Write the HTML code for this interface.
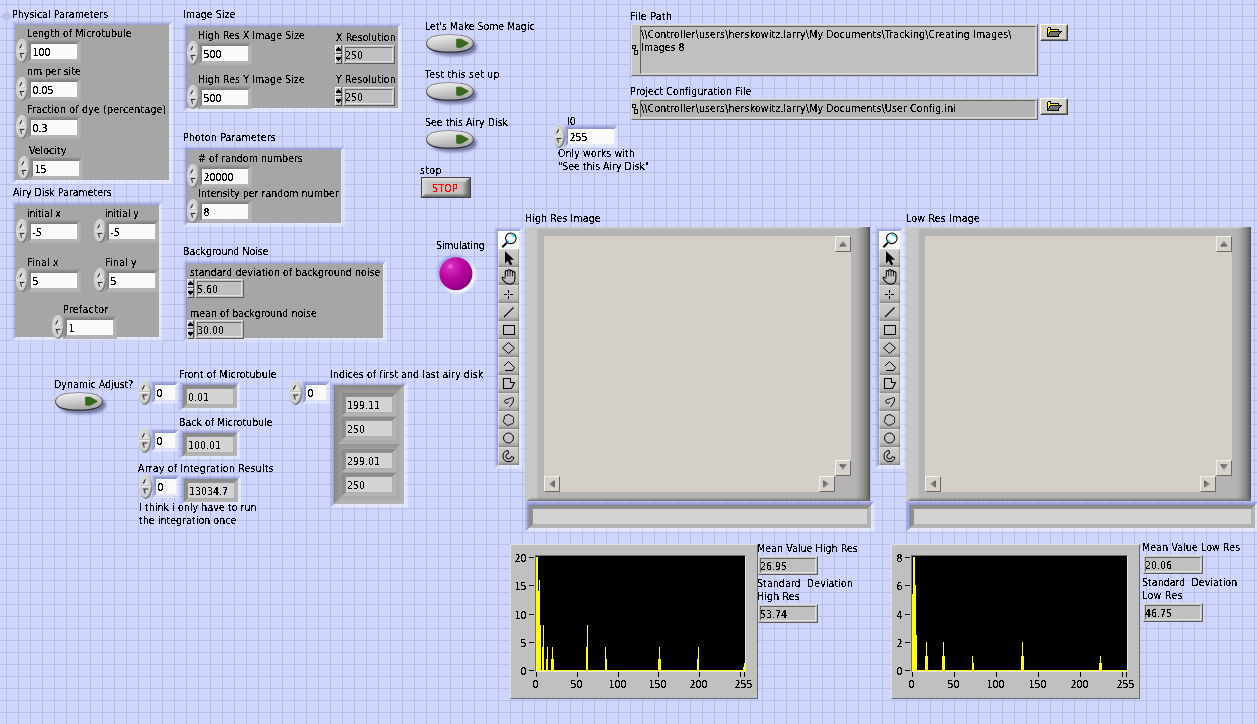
<!DOCTYPE html>
<html><head><meta charset="utf-8"><title>Front Panel</title>
<style>
html,body{margin:0;padding:0}
body{width:1257px;height:724px;overflow:hidden;position:relative;background-color:#cfd6fd;
background-image:linear-gradient(to right,#b8bfe7 1px,transparent 1px),linear-gradient(to bottom,#b8bfe7 1px,transparent 1px);
background-size:12px 12px;background-position:6px 4px;
font-family:'DejaVu Sans Condensed','Liberation Sans',sans-serif;font-size:10.5px;line-height:13px;color:#000}
div,svg{position:absolute;box-sizing:border-box}
svg{overflow:visible}
.t{white-space:pre;height:13px;filter:url(#thr)}
</style></head><body>
<svg width="0" height="0" style="left:0;top:0"><defs><filter id="thr" x="0" y="0" width="100%" height="100%" color-interpolation-filters="sRGB"><feComponentTransfer><feFuncA type="discrete" tableValues="0 0 0 0 0 0 0 0 1 1 1 1 1 1 1 1 1 1 1 1"/></feComponentTransfer></filter><linearGradient id="sg" x1="0" y1="0" x2="1" y2="1"><stop offset="0" stop-color="#f6f6f6"/><stop offset=".4" stop-color="#d4d4d4"/><stop offset=".75" stop-color="#8a8a8a"/><stop offset="1" stop-color="#505050"/></linearGradient><linearGradient id="og" x1="0" y1="0" x2="0.3" y2="1"><stop offset="0" stop-color="#f6f6f6"/><stop offset=".45" stop-color="#d6d6d6"/><stop offset="1" stop-color="#acacac"/></linearGradient><linearGradient id="oo" x1="0" y1="0" x2="0" y2="1"><stop offset="0" stop-color="#7c7c7c"/><stop offset=".5" stop-color="#4a4a4a"/><stop offset="1" stop-color="#2c2c2c"/></linearGradient><filter id="ob" x="-20%" y="-40%" width="150%" height="200%"><feGaussianBlur stdDeviation="1.5"/></filter><linearGradient id="agu" x1="0.3" y1="1" x2="0.6" y2="0"><stop offset="0" stop-color="#505050"/><stop offset=".55" stop-color="#8c8c8c"/><stop offset="1" stop-color="#c8c8c8"/></linearGradient><linearGradient id="agd" x1="0.2" y1="0" x2="0.7" y2="1"><stop offset="0" stop-color="#505050"/><stop offset=".55" stop-color="#8c8c8c"/><stop offset="1" stop-color="#c8c8c8"/></linearGradient><linearGradient id="agl" x1="1" y1="0.3" x2="0" y2="0.6"><stop offset="0" stop-color="#505050"/><stop offset=".55" stop-color="#8c8c8c"/><stop offset="1" stop-color="#c8c8c8"/></linearGradient><linearGradient id="agr" x1="0" y1="0.2" x2="1" y2="0.7"><stop offset="0" stop-color="#505050"/><stop offset=".55" stop-color="#8c8c8c"/><stop offset="1" stop-color="#c8c8c8"/></linearGradient></defs></svg>
<svg style="left:0;top:10px" width="13" height="13" viewBox="0 0 13 13"><path d="M6.5 1L12 6.5L6.5 12L1 6.5Z" fill="#bcc2ea"/></svg>
<div class="t" style="left:12px;top:8px;letter-spacing:0.041px;">Physical Parameters</div>
<div style="left:12px;top:21px;width:161px;height:163px;border:1px solid;border-color:rgba(70,80,155,.07) rgba(255,255,255,.30) rgba(255,255,255,.30) rgba(70,80,155,.07);"></div>
<div style="left:13px;top:22px;width:159px;height:161px;border:1px solid;border-color:rgba(70,80,155,.16) rgba(255,255,255,.36) rgba(255,255,255,.36) rgba(70,80,155,.16);"></div>
<div style="left:14px;top:23px;width:157px;height:159px;border:1px solid;border-color:rgba(70,80,155,.27) rgba(255,255,255,.40) rgba(255,255,255,.40) rgba(70,80,155,.27);"></div>
<div style="left:15px;top:24px;width:155px;height:157px;border:1px solid;border-color:rgba(70,80,155,.38) rgba(255,255,255,.44) rgba(255,255,255,.44) rgba(70,80,155,.38);"></div>
<div style="left:16px;top:25px;width:153px;height:155px;background:#a6a6a6;"></div>
<div class="t" style="left:27px;top:27px;letter-spacing:0.071px;">Length of Microtubule</div>
<div style="left:27px;top:40px;width:54px;height:23px;border:1px solid;border-color:#9c9c9c #b0b0b0 #b0b0b0 #9c9c9c;"></div>
<div style="left:28px;top:41px;width:52px;height:21px;border:1px solid;border-color:#929292 #b2b2b2 #b2b2b2 #929292;"></div>
<div style="left:29px;top:42px;width:50px;height:19px;border:1px solid;border-color:#888888 #b4b4b4 #b4b4b4 #888888;"></div>
<div style="left:30px;top:43px;width:48px;height:17px;border:1px solid;border-color:#808080 #b6b6b6 #b6b6b6 #808080;"></div>
<div style="left:31px;top:44px;width:46px;height:15px;background:#fafafa;"></div>
<div class="t" style="left:32.4px;top:46px;">100</div>
<svg style="left:16.0px;top:39.0px" width="12" height="24" viewBox="0 0 12 24" preserveAspectRatio="none"><ellipse cx="6" cy="12" rx="6" ry="12" fill="url(#sg)"/><ellipse cx="5.5" cy="11.5" rx="5" ry="10.9" fill="#cfcfcf"/><ellipse cx="4.6" cy="8" rx="3" ry="6" fill="#dadada" opacity=".7"/><path d="M.8 11.2h9.6" stroke="#b4b4b4" stroke-width=".7"/><path d="M.8 12h9.8" stroke="#ececec" stroke-width="1"/><path d="M5.9 5L3.7 9.4" stroke="#2c2c2c" stroke-width="1.1" fill="none"/><path d="M6 5.4L8.2 9.7H3.8" stroke="#f0f0f0" stroke-width=".9" fill="none"/><path d="M3.7 14.5H8.3" stroke="#333333" stroke-width="1.1" fill="none"/><path d="M5.7 18.8L4.5 14.8" stroke="#3c3c3c" stroke-width="1.1" fill="none"/><path d="M6.1 18.6L8.2 15" stroke="#f0f0f0" stroke-width=".9" fill="none"/></svg>
<div class="t" style="left:27px;top:65px;letter-spacing:-0.025px;">nm per site</div>
<div style="left:27px;top:78px;width:54px;height:23px;border:1px solid;border-color:#9c9c9c #b0b0b0 #b0b0b0 #9c9c9c;"></div>
<div style="left:28px;top:79px;width:52px;height:21px;border:1px solid;border-color:#929292 #b2b2b2 #b2b2b2 #929292;"></div>
<div style="left:29px;top:80px;width:50px;height:19px;border:1px solid;border-color:#888888 #b4b4b4 #b4b4b4 #888888;"></div>
<div style="left:30px;top:81px;width:48px;height:17px;border:1px solid;border-color:#808080 #b6b6b6 #b6b6b6 #808080;"></div>
<div style="left:31px;top:82px;width:46px;height:15px;background:#fafafa;"></div>
<div class="t" style="left:32.4px;top:84px;">0.05</div>
<svg style="left:16.0px;top:77.0px" width="12" height="24" viewBox="0 0 12 24" preserveAspectRatio="none"><ellipse cx="6" cy="12" rx="6" ry="12" fill="url(#sg)"/><ellipse cx="5.5" cy="11.5" rx="5" ry="10.9" fill="#cfcfcf"/><ellipse cx="4.6" cy="8" rx="3" ry="6" fill="#dadada" opacity=".7"/><path d="M.8 11.2h9.6" stroke="#b4b4b4" stroke-width=".7"/><path d="M.8 12h9.8" stroke="#ececec" stroke-width="1"/><path d="M5.9 5L3.7 9.4" stroke="#2c2c2c" stroke-width="1.1" fill="none"/><path d="M6 5.4L8.2 9.7H3.8" stroke="#f0f0f0" stroke-width=".9" fill="none"/><path d="M3.7 14.5H8.3" stroke="#333333" stroke-width="1.1" fill="none"/><path d="M5.7 18.8L4.5 14.8" stroke="#3c3c3c" stroke-width="1.1" fill="none"/><path d="M6.1 18.6L8.2 15" stroke="#f0f0f0" stroke-width=".9" fill="none"/></svg>
<div class="t" style="left:27px;top:103px;letter-spacing:0.186px;">Fraction of dye (percentage)</div>
<div style="left:27px;top:116px;width:54px;height:23px;border:1px solid;border-color:#9c9c9c #b0b0b0 #b0b0b0 #9c9c9c;"></div>
<div style="left:28px;top:117px;width:52px;height:21px;border:1px solid;border-color:#929292 #b2b2b2 #b2b2b2 #929292;"></div>
<div style="left:29px;top:118px;width:50px;height:19px;border:1px solid;border-color:#888888 #b4b4b4 #b4b4b4 #888888;"></div>
<div style="left:30px;top:119px;width:48px;height:17px;border:1px solid;border-color:#808080 #b6b6b6 #b6b6b6 #808080;"></div>
<div style="left:31px;top:120px;width:46px;height:15px;background:#fafafa;"></div>
<div class="t" style="left:32.4px;top:122px;">0.3</div>
<svg style="left:16.0px;top:115.0px" width="12" height="24" viewBox="0 0 12 24" preserveAspectRatio="none"><ellipse cx="6" cy="12" rx="6" ry="12" fill="url(#sg)"/><ellipse cx="5.5" cy="11.5" rx="5" ry="10.9" fill="#cfcfcf"/><ellipse cx="4.6" cy="8" rx="3" ry="6" fill="#dadada" opacity=".7"/><path d="M.8 11.2h9.6" stroke="#b4b4b4" stroke-width=".7"/><path d="M.8 12h9.8" stroke="#ececec" stroke-width="1"/><path d="M5.9 5L3.7 9.4" stroke="#2c2c2c" stroke-width="1.1" fill="none"/><path d="M6 5.4L8.2 9.7H3.8" stroke="#f0f0f0" stroke-width=".9" fill="none"/><path d="M3.7 14.5H8.3" stroke="#333333" stroke-width="1.1" fill="none"/><path d="M5.7 18.8L4.5 14.8" stroke="#3c3c3c" stroke-width="1.1" fill="none"/><path d="M6.1 18.6L8.2 15" stroke="#f0f0f0" stroke-width=".9" fill="none"/></svg>
<div class="t" style="left:29px;top:144px;letter-spacing:0.045px;">Velocity</div>
<div style="left:29px;top:157px;width:54px;height:23px;border:1px solid;border-color:#9c9c9c #b0b0b0 #b0b0b0 #9c9c9c;"></div>
<div style="left:30px;top:158px;width:52px;height:21px;border:1px solid;border-color:#929292 #b2b2b2 #b2b2b2 #929292;"></div>
<div style="left:31px;top:159px;width:50px;height:19px;border:1px solid;border-color:#888888 #b4b4b4 #b4b4b4 #888888;"></div>
<div style="left:32px;top:160px;width:48px;height:17px;border:1px solid;border-color:#808080 #b6b6b6 #b6b6b6 #808080;"></div>
<div style="left:33px;top:161px;width:46px;height:15px;background:#fafafa;"></div>
<div class="t" style="left:34.4px;top:163px;">15</div>
<svg style="left:18.0px;top:156.0px" width="12" height="24" viewBox="0 0 12 24" preserveAspectRatio="none"><ellipse cx="6" cy="12" rx="6" ry="12" fill="url(#sg)"/><ellipse cx="5.5" cy="11.5" rx="5" ry="10.9" fill="#cfcfcf"/><ellipse cx="4.6" cy="8" rx="3" ry="6" fill="#dadada" opacity=".7"/><path d="M.8 11.2h9.6" stroke="#b4b4b4" stroke-width=".7"/><path d="M.8 12h9.8" stroke="#ececec" stroke-width="1"/><path d="M5.9 5L3.7 9.4" stroke="#2c2c2c" stroke-width="1.1" fill="none"/><path d="M6 5.4L8.2 9.7H3.8" stroke="#f0f0f0" stroke-width=".9" fill="none"/><path d="M3.7 14.5H8.3" stroke="#333333" stroke-width="1.1" fill="none"/><path d="M5.7 18.8L4.5 14.8" stroke="#3c3c3c" stroke-width="1.1" fill="none"/><path d="M6.1 18.6L8.2 15" stroke="#f0f0f0" stroke-width=".9" fill="none"/></svg>
<div class="t" style="left:13px;top:186px;letter-spacing:-0.004px;">Airy Disk Parameters</div>
<div style="left:12px;top:201px;width:151px;height:140px;border:1px solid;border-color:rgba(70,80,155,.07) rgba(255,255,255,.30) rgba(255,255,255,.30) rgba(70,80,155,.07);"></div>
<div style="left:13px;top:202px;width:149px;height:138px;border:1px solid;border-color:rgba(70,80,155,.16) rgba(255,255,255,.36) rgba(255,255,255,.36) rgba(70,80,155,.16);"></div>
<div style="left:14px;top:203px;width:147px;height:136px;border:1px solid;border-color:rgba(70,80,155,.27) rgba(255,255,255,.40) rgba(255,255,255,.40) rgba(70,80,155,.27);"></div>
<div style="left:15px;top:204px;width:145px;height:134px;border:1px solid;border-color:rgba(70,80,155,.38) rgba(255,255,255,.44) rgba(255,255,255,.44) rgba(70,80,155,.38);"></div>
<div style="left:16px;top:205px;width:143px;height:132px;background:#a6a6a6;"></div>
<div class="t" style="left:27px;top:207px;letter-spacing:-0.085px;">initial x</div>
<div style="left:27px;top:220px;width:54px;height:23px;border:1px solid;border-color:#9c9c9c #b0b0b0 #b0b0b0 #9c9c9c;"></div>
<div style="left:28px;top:221px;width:52px;height:21px;border:1px solid;border-color:#929292 #b2b2b2 #b2b2b2 #929292;"></div>
<div style="left:29px;top:222px;width:50px;height:19px;border:1px solid;border-color:#888888 #b4b4b4 #b4b4b4 #888888;"></div>
<div style="left:30px;top:223px;width:48px;height:17px;border:1px solid;border-color:#808080 #b6b6b6 #b6b6b6 #808080;"></div>
<div style="left:31px;top:224px;width:46px;height:15px;background:#fafafa;"></div>
<div class="t" style="left:32.4px;top:226px;">-5</div>
<svg style="left:16.0px;top:219.0px" width="12" height="24" viewBox="0 0 12 24" preserveAspectRatio="none"><ellipse cx="6" cy="12" rx="6" ry="12" fill="url(#sg)"/><ellipse cx="5.5" cy="11.5" rx="5" ry="10.9" fill="#cfcfcf"/><ellipse cx="4.6" cy="8" rx="3" ry="6" fill="#dadada" opacity=".7"/><path d="M.8 11.2h9.6" stroke="#b4b4b4" stroke-width=".7"/><path d="M.8 12h9.8" stroke="#ececec" stroke-width="1"/><path d="M5.9 5L3.7 9.4" stroke="#2c2c2c" stroke-width="1.1" fill="none"/><path d="M6 5.4L8.2 9.7H3.8" stroke="#f0f0f0" stroke-width=".9" fill="none"/><path d="M3.7 14.5H8.3" stroke="#333333" stroke-width="1.1" fill="none"/><path d="M5.7 18.8L4.5 14.8" stroke="#3c3c3c" stroke-width="1.1" fill="none"/><path d="M6.1 18.6L8.2 15" stroke="#f0f0f0" stroke-width=".9" fill="none"/></svg>
<div class="t" style="left:105px;top:207px;letter-spacing:-0.097px;">initial y</div>
<div style="left:105px;top:220px;width:54px;height:23px;border:1px solid;border-color:#9c9c9c #b0b0b0 #b0b0b0 #9c9c9c;"></div>
<div style="left:106px;top:221px;width:52px;height:21px;border:1px solid;border-color:#929292 #b2b2b2 #b2b2b2 #929292;"></div>
<div style="left:107px;top:222px;width:50px;height:19px;border:1px solid;border-color:#888888 #b4b4b4 #b4b4b4 #888888;"></div>
<div style="left:108px;top:223px;width:48px;height:17px;border:1px solid;border-color:#808080 #b6b6b6 #b6b6b6 #808080;"></div>
<div style="left:109px;top:224px;width:46px;height:15px;background:#fafafa;"></div>
<div class="t" style="left:110.4px;top:226px;">-5</div>
<svg style="left:94.0px;top:219.0px" width="12" height="24" viewBox="0 0 12 24" preserveAspectRatio="none"><ellipse cx="6" cy="12" rx="6" ry="12" fill="url(#sg)"/><ellipse cx="5.5" cy="11.5" rx="5" ry="10.9" fill="#cfcfcf"/><ellipse cx="4.6" cy="8" rx="3" ry="6" fill="#dadada" opacity=".7"/><path d="M.8 11.2h9.6" stroke="#b4b4b4" stroke-width=".7"/><path d="M.8 12h9.8" stroke="#ececec" stroke-width="1"/><path d="M5.9 5L3.7 9.4" stroke="#2c2c2c" stroke-width="1.1" fill="none"/><path d="M6 5.4L8.2 9.7H3.8" stroke="#f0f0f0" stroke-width=".9" fill="none"/><path d="M3.7 14.5H8.3" stroke="#333333" stroke-width="1.1" fill="none"/><path d="M5.7 18.8L4.5 14.8" stroke="#3c3c3c" stroke-width="1.1" fill="none"/><path d="M6.1 18.6L8.2 15" stroke="#f0f0f0" stroke-width=".9" fill="none"/></svg>
<div class="t" style="left:27px;top:256px;letter-spacing:0.201px;">Final x</div>
<div style="left:27px;top:269px;width:54px;height:23px;border:1px solid;border-color:#9c9c9c #b0b0b0 #b0b0b0 #9c9c9c;"></div>
<div style="left:28px;top:270px;width:52px;height:21px;border:1px solid;border-color:#929292 #b2b2b2 #b2b2b2 #929292;"></div>
<div style="left:29px;top:271px;width:50px;height:19px;border:1px solid;border-color:#888888 #b4b4b4 #b4b4b4 #888888;"></div>
<div style="left:30px;top:272px;width:48px;height:17px;border:1px solid;border-color:#808080 #b6b6b6 #b6b6b6 #808080;"></div>
<div style="left:31px;top:273px;width:46px;height:15px;background:#fafafa;"></div>
<div class="t" style="left:32.4px;top:275px;">5</div>
<svg style="left:16.0px;top:268.0px" width="12" height="24" viewBox="0 0 12 24" preserveAspectRatio="none"><ellipse cx="6" cy="12" rx="6" ry="12" fill="url(#sg)"/><ellipse cx="5.5" cy="11.5" rx="5" ry="10.9" fill="#cfcfcf"/><ellipse cx="4.6" cy="8" rx="3" ry="6" fill="#dadada" opacity=".7"/><path d="M.8 11.2h9.6" stroke="#b4b4b4" stroke-width=".7"/><path d="M.8 12h9.8" stroke="#ececec" stroke-width="1"/><path d="M5.9 5L3.7 9.4" stroke="#2c2c2c" stroke-width="1.1" fill="none"/><path d="M6 5.4L8.2 9.7H3.8" stroke="#f0f0f0" stroke-width=".9" fill="none"/><path d="M3.7 14.5H8.3" stroke="#333333" stroke-width="1.1" fill="none"/><path d="M5.7 18.8L4.5 14.8" stroke="#3c3c3c" stroke-width="1.1" fill="none"/><path d="M6.1 18.6L8.2 15" stroke="#f0f0f0" stroke-width=".9" fill="none"/></svg>
<div class="t" style="left:105px;top:256px;letter-spacing:0.201px;">Final y</div>
<div style="left:105px;top:269px;width:54px;height:23px;border:1px solid;border-color:#9c9c9c #b0b0b0 #b0b0b0 #9c9c9c;"></div>
<div style="left:106px;top:270px;width:52px;height:21px;border:1px solid;border-color:#929292 #b2b2b2 #b2b2b2 #929292;"></div>
<div style="left:107px;top:271px;width:50px;height:19px;border:1px solid;border-color:#888888 #b4b4b4 #b4b4b4 #888888;"></div>
<div style="left:108px;top:272px;width:48px;height:17px;border:1px solid;border-color:#808080 #b6b6b6 #b6b6b6 #808080;"></div>
<div style="left:109px;top:273px;width:46px;height:15px;background:#fafafa;"></div>
<div class="t" style="left:110.4px;top:275px;">5</div>
<svg style="left:94.0px;top:268.0px" width="12" height="24" viewBox="0 0 12 24" preserveAspectRatio="none"><ellipse cx="6" cy="12" rx="6" ry="12" fill="url(#sg)"/><ellipse cx="5.5" cy="11.5" rx="5" ry="10.9" fill="#cfcfcf"/><ellipse cx="4.6" cy="8" rx="3" ry="6" fill="#dadada" opacity=".7"/><path d="M.8 11.2h9.6" stroke="#b4b4b4" stroke-width=".7"/><path d="M.8 12h9.8" stroke="#ececec" stroke-width="1"/><path d="M5.9 5L3.7 9.4" stroke="#2c2c2c" stroke-width="1.1" fill="none"/><path d="M6 5.4L8.2 9.7H3.8" stroke="#f0f0f0" stroke-width=".9" fill="none"/><path d="M3.7 14.5H8.3" stroke="#333333" stroke-width="1.1" fill="none"/><path d="M5.7 18.8L4.5 14.8" stroke="#3c3c3c" stroke-width="1.1" fill="none"/><path d="M6.1 18.6L8.2 15" stroke="#f0f0f0" stroke-width=".9" fill="none"/></svg>
<div class="t" style="left:63px;top:303px;letter-spacing:0.330px;">Prefactor</div>
<div style="left:63px;top:316px;width:54px;height:23px;border:1px solid;border-color:#9c9c9c #b0b0b0 #b0b0b0 #9c9c9c;"></div>
<div style="left:64px;top:317px;width:52px;height:21px;border:1px solid;border-color:#929292 #b2b2b2 #b2b2b2 #929292;"></div>
<div style="left:65px;top:318px;width:50px;height:19px;border:1px solid;border-color:#888888 #b4b4b4 #b4b4b4 #888888;"></div>
<div style="left:66px;top:319px;width:48px;height:17px;border:1px solid;border-color:#808080 #b6b6b6 #b6b6b6 #808080;"></div>
<div style="left:67px;top:320px;width:46px;height:15px;background:#fafafa;"></div>
<div class="t" style="left:68.4px;top:322px;">1</div>
<svg style="left:52.0px;top:315.0px" width="12" height="24" viewBox="0 0 12 24" preserveAspectRatio="none"><ellipse cx="6" cy="12" rx="6" ry="12" fill="url(#sg)"/><ellipse cx="5.5" cy="11.5" rx="5" ry="10.9" fill="#cfcfcf"/><ellipse cx="4.6" cy="8" rx="3" ry="6" fill="#dadada" opacity=".7"/><path d="M.8 11.2h9.6" stroke="#b4b4b4" stroke-width=".7"/><path d="M.8 12h9.8" stroke="#ececec" stroke-width="1"/><path d="M5.9 5L3.7 9.4" stroke="#2c2c2c" stroke-width="1.1" fill="none"/><path d="M6 5.4L8.2 9.7H3.8" stroke="#f0f0f0" stroke-width=".9" fill="none"/><path d="M3.7 14.5H8.3" stroke="#333333" stroke-width="1.1" fill="none"/><path d="M5.7 18.8L4.5 14.8" stroke="#3c3c3c" stroke-width="1.1" fill="none"/><path d="M6.1 18.6L8.2 15" stroke="#f0f0f0" stroke-width=".9" fill="none"/></svg>
<div class="t" style="left:183px;top:8px;letter-spacing:0.024px;">Image Size</div>
<div style="left:183px;top:23px;width:219px;height:89px;border:1px solid;border-color:rgba(70,80,155,.07) rgba(255,255,255,.30) rgba(255,255,255,.30) rgba(70,80,155,.07);"></div>
<div style="left:184px;top:24px;width:217px;height:87px;border:1px solid;border-color:rgba(70,80,155,.16) rgba(255,255,255,.36) rgba(255,255,255,.36) rgba(70,80,155,.16);"></div>
<div style="left:185px;top:25px;width:215px;height:85px;border:1px solid;border-color:rgba(70,80,155,.27) rgba(255,255,255,.40) rgba(255,255,255,.40) rgba(70,80,155,.27);"></div>
<div style="left:186px;top:26px;width:213px;height:83px;border:1px solid;border-color:rgba(70,80,155,.38) rgba(255,255,255,.44) rgba(255,255,255,.44) rgba(70,80,155,.38);"></div>
<div style="left:187px;top:27px;width:211px;height:81px;background:#a6a6a6;"></div>
<div class="t" style="left:198px;top:29px;letter-spacing:0.035px;">High Res X Image Size</div>
<div style="left:198px;top:42px;width:54px;height:23px;border:1px solid;border-color:#9c9c9c #b0b0b0 #b0b0b0 #9c9c9c;"></div>
<div style="left:199px;top:43px;width:52px;height:21px;border:1px solid;border-color:#929292 #b2b2b2 #b2b2b2 #929292;"></div>
<div style="left:200px;top:44px;width:50px;height:19px;border:1px solid;border-color:#888888 #b4b4b4 #b4b4b4 #888888;"></div>
<div style="left:201px;top:45px;width:48px;height:17px;border:1px solid;border-color:#808080 #b6b6b6 #b6b6b6 #808080;"></div>
<div style="left:202px;top:46px;width:46px;height:15px;background:#fafafa;"></div>
<div class="t" style="left:203.4px;top:48px;">500</div>
<svg style="left:187.0px;top:41.0px" width="12" height="24" viewBox="0 0 12 24" preserveAspectRatio="none"><ellipse cx="6" cy="12" rx="6" ry="12" fill="url(#sg)"/><ellipse cx="5.5" cy="11.5" rx="5" ry="10.9" fill="#cfcfcf"/><ellipse cx="4.6" cy="8" rx="3" ry="6" fill="#dadada" opacity=".7"/><path d="M.8 11.2h9.6" stroke="#b4b4b4" stroke-width=".7"/><path d="M.8 12h9.8" stroke="#ececec" stroke-width="1"/><path d="M5.9 5L3.7 9.4" stroke="#2c2c2c" stroke-width="1.1" fill="none"/><path d="M6 5.4L8.2 9.7H3.8" stroke="#f0f0f0" stroke-width=".9" fill="none"/><path d="M3.7 14.5H8.3" stroke="#333333" stroke-width="1.1" fill="none"/><path d="M5.7 18.8L4.5 14.8" stroke="#3c3c3c" stroke-width="1.1" fill="none"/><path d="M6.1 18.6L8.2 15" stroke="#f0f0f0" stroke-width=".9" fill="none"/></svg>
<div class="t" style="left:198px;top:73px;letter-spacing:0.070px;">High Res Y Image Size</div>
<div style="left:198px;top:86px;width:54px;height:23px;border:1px solid;border-color:#9c9c9c #b0b0b0 #b0b0b0 #9c9c9c;"></div>
<div style="left:199px;top:87px;width:52px;height:21px;border:1px solid;border-color:#929292 #b2b2b2 #b2b2b2 #929292;"></div>
<div style="left:200px;top:88px;width:50px;height:19px;border:1px solid;border-color:#888888 #b4b4b4 #b4b4b4 #888888;"></div>
<div style="left:201px;top:89px;width:48px;height:17px;border:1px solid;border-color:#808080 #b6b6b6 #b6b6b6 #808080;"></div>
<div style="left:202px;top:90px;width:46px;height:15px;background:#fafafa;"></div>
<div class="t" style="left:203.4px;top:92px;">500</div>
<svg style="left:187.0px;top:85.0px" width="12" height="24" viewBox="0 0 12 24" preserveAspectRatio="none"><ellipse cx="6" cy="12" rx="6" ry="12" fill="url(#sg)"/><ellipse cx="5.5" cy="11.5" rx="5" ry="10.9" fill="#cfcfcf"/><ellipse cx="4.6" cy="8" rx="3" ry="6" fill="#dadada" opacity=".7"/><path d="M.8 11.2h9.6" stroke="#b4b4b4" stroke-width=".7"/><path d="M.8 12h9.8" stroke="#ececec" stroke-width="1"/><path d="M5.9 5L3.7 9.4" stroke="#2c2c2c" stroke-width="1.1" fill="none"/><path d="M6 5.4L8.2 9.7H3.8" stroke="#f0f0f0" stroke-width=".9" fill="none"/><path d="M3.7 14.5H8.3" stroke="#333333" stroke-width="1.1" fill="none"/><path d="M5.7 18.8L4.5 14.8" stroke="#3c3c3c" stroke-width="1.1" fill="none"/><path d="M6.1 18.6L8.2 15" stroke="#f0f0f0" stroke-width=".9" fill="none"/></svg>
<div class="t" style="left:336px;top:31px;letter-spacing:0.084px;">X Resolution</div>
<div style="left:335px;top:45px;width:7px;height:9px;background:#c4c4c4;border:1px solid;border-color:#f4f4f4 #4a4a4a #4a4a4a #f4f4f4;"></div>
<div style="left:335px;top:54px;width:7px;height:10px;background:#c4c4c4;border:1px solid;border-color:#f4f4f4 #4a4a4a #4a4a4a #f4f4f4;"></div>
<svg style="left:335px;top:45px" width="7" height="19" viewBox="0 0 7 19" shape-rendering="crispEdges"><path d="M3 2h1v1h1v1h1v2h-5v-2h1v-1h1z" fill="#000"/><path d="M1 12h5v2h-1v1h-1v1h-1v-1h-1v-1h-1z" fill="#000"/></svg>
<div style="left:343px;top:45px;width:52px;height:19px;background:#c0c0c0;border:1px solid;border-color:#dedede #5c5c5c #5c5c5c #dedede;"></div>
<div style="left:345px;top:47px;width:48px;height:15px;border:1px solid;border-color:#666 #e2e2e2 #e2e2e2 #666;"></div>
<div class="t" style="left:345px;top:49px;">250</div>
<div class="t" style="left:336px;top:73px;letter-spacing:0.147px;">Y Resolution</div>
<div style="left:335px;top:87px;width:7px;height:9px;background:#c4c4c4;border:1px solid;border-color:#f4f4f4 #4a4a4a #4a4a4a #f4f4f4;"></div>
<div style="left:335px;top:96px;width:7px;height:10px;background:#c4c4c4;border:1px solid;border-color:#f4f4f4 #4a4a4a #4a4a4a #f4f4f4;"></div>
<svg style="left:335px;top:87px" width="7" height="19" viewBox="0 0 7 19" shape-rendering="crispEdges"><path d="M3 2h1v1h1v1h1v2h-5v-2h1v-1h1z" fill="#000"/><path d="M1 12h5v2h-1v1h-1v1h-1v-1h-1v-1h-1z" fill="#000"/></svg>
<div style="left:343px;top:87px;width:52px;height:19px;background:#c0c0c0;border:1px solid;border-color:#dedede #5c5c5c #5c5c5c #dedede;"></div>
<div style="left:345px;top:89px;width:48px;height:15px;border:1px solid;border-color:#666 #e2e2e2 #e2e2e2 #666;"></div>
<div class="t" style="left:345px;top:91px;">250</div>
<div class="t" style="left:183px;top:131px;letter-spacing:0.172px;">Photon Parameters</div>
<div style="left:183px;top:146px;width:162px;height:81px;border:1px solid;border-color:rgba(70,80,155,.07) rgba(255,255,255,.30) rgba(255,255,255,.30) rgba(70,80,155,.07);"></div>
<div style="left:184px;top:147px;width:160px;height:79px;border:1px solid;border-color:rgba(70,80,155,.16) rgba(255,255,255,.36) rgba(255,255,255,.36) rgba(70,80,155,.16);"></div>
<div style="left:185px;top:148px;width:158px;height:77px;border:1px solid;border-color:rgba(70,80,155,.27) rgba(255,255,255,.40) rgba(255,255,255,.40) rgba(70,80,155,.27);"></div>
<div style="left:186px;top:149px;width:156px;height:75px;border:1px solid;border-color:rgba(70,80,155,.38) rgba(255,255,255,.44) rgba(255,255,255,.44) rgba(70,80,155,.38);"></div>
<div style="left:187px;top:150px;width:154px;height:73px;background:#a6a6a6;"></div>
<div class="t" style="left:198px;top:152px;letter-spacing:0.019px;"># of random numbers</div>
<div style="left:198px;top:165px;width:54px;height:23px;border:1px solid;border-color:#9c9c9c #b0b0b0 #b0b0b0 #9c9c9c;"></div>
<div style="left:199px;top:166px;width:52px;height:21px;border:1px solid;border-color:#929292 #b2b2b2 #b2b2b2 #929292;"></div>
<div style="left:200px;top:167px;width:50px;height:19px;border:1px solid;border-color:#888888 #b4b4b4 #b4b4b4 #888888;"></div>
<div style="left:201px;top:168px;width:48px;height:17px;border:1px solid;border-color:#808080 #b6b6b6 #b6b6b6 #808080;"></div>
<div style="left:202px;top:169px;width:46px;height:15px;background:#fafafa;"></div>
<div class="t" style="left:203.4px;top:171px;">20000</div>
<svg style="left:187.0px;top:164.0px" width="12" height="24" viewBox="0 0 12 24" preserveAspectRatio="none"><ellipse cx="6" cy="12" rx="6" ry="12" fill="url(#sg)"/><ellipse cx="5.5" cy="11.5" rx="5" ry="10.9" fill="#cfcfcf"/><ellipse cx="4.6" cy="8" rx="3" ry="6" fill="#dadada" opacity=".7"/><path d="M.8 11.2h9.6" stroke="#b4b4b4" stroke-width=".7"/><path d="M.8 12h9.8" stroke="#ececec" stroke-width="1"/><path d="M5.9 5L3.7 9.4" stroke="#2c2c2c" stroke-width="1.1" fill="none"/><path d="M6 5.4L8.2 9.7H3.8" stroke="#f0f0f0" stroke-width=".9" fill="none"/><path d="M3.7 14.5H8.3" stroke="#333333" stroke-width="1.1" fill="none"/><path d="M5.7 18.8L4.5 14.8" stroke="#3c3c3c" stroke-width="1.1" fill="none"/><path d="M6.1 18.6L8.2 15" stroke="#f0f0f0" stroke-width=".9" fill="none"/></svg>
<div class="t" style="left:198px;top:187px;letter-spacing:0.053px;">Intensity per random number</div>
<div style="left:198px;top:200px;width:54px;height:23px;border:1px solid;border-color:#9c9c9c #b0b0b0 #b0b0b0 #9c9c9c;"></div>
<div style="left:199px;top:201px;width:52px;height:21px;border:1px solid;border-color:#929292 #b2b2b2 #b2b2b2 #929292;"></div>
<div style="left:200px;top:202px;width:50px;height:19px;border:1px solid;border-color:#888888 #b4b4b4 #b4b4b4 #888888;"></div>
<div style="left:201px;top:203px;width:48px;height:17px;border:1px solid;border-color:#808080 #b6b6b6 #b6b6b6 #808080;"></div>
<div style="left:202px;top:204px;width:46px;height:15px;background:#fafafa;"></div>
<div class="t" style="left:203.4px;top:206px;">8</div>
<svg style="left:187.0px;top:199.0px" width="12" height="24" viewBox="0 0 12 24" preserveAspectRatio="none"><ellipse cx="6" cy="12" rx="6" ry="12" fill="url(#sg)"/><ellipse cx="5.5" cy="11.5" rx="5" ry="10.9" fill="#cfcfcf"/><ellipse cx="4.6" cy="8" rx="3" ry="6" fill="#dadada" opacity=".7"/><path d="M.8 11.2h9.6" stroke="#b4b4b4" stroke-width=".7"/><path d="M.8 12h9.8" stroke="#ececec" stroke-width="1"/><path d="M5.9 5L3.7 9.4" stroke="#2c2c2c" stroke-width="1.1" fill="none"/><path d="M6 5.4L8.2 9.7H3.8" stroke="#f0f0f0" stroke-width=".9" fill="none"/><path d="M3.7 14.5H8.3" stroke="#333333" stroke-width="1.1" fill="none"/><path d="M5.7 18.8L4.5 14.8" stroke="#3c3c3c" stroke-width="1.1" fill="none"/><path d="M6.1 18.6L8.2 15" stroke="#f0f0f0" stroke-width=".9" fill="none"/></svg>
<div class="t" style="left:183px;top:245px;letter-spacing:0.004px;">Background Noise</div>
<div style="left:183px;top:260px;width:204px;height:82px;border:1px solid;border-color:rgba(70,80,155,.07) rgba(255,255,255,.30) rgba(255,255,255,.30) rgba(70,80,155,.07);"></div>
<div style="left:184px;top:261px;width:202px;height:80px;border:1px solid;border-color:rgba(70,80,155,.16) rgba(255,255,255,.36) rgba(255,255,255,.36) rgba(70,80,155,.16);"></div>
<div style="left:185px;top:262px;width:200px;height:78px;border:1px solid;border-color:rgba(70,80,155,.27) rgba(255,255,255,.40) rgba(255,255,255,.40) rgba(70,80,155,.27);"></div>
<div style="left:186px;top:263px;width:198px;height:76px;border:1px solid;border-color:rgba(70,80,155,.38) rgba(255,255,255,.44) rgba(255,255,255,.44) rgba(70,80,155,.38);"></div>
<div style="left:187px;top:264px;width:196px;height:74px;background:#a6a6a6;"></div>
<div class="t" style="left:190px;top:266px;letter-spacing:0.068px;">standard deviation of background noise</div>
<div style="left:187px;top:279px;width:7px;height:9px;background:#c4c4c4;border:1px solid;border-color:#f4f4f4 #4a4a4a #4a4a4a #f4f4f4;"></div>
<div style="left:187px;top:288px;width:7px;height:10px;background:#c4c4c4;border:1px solid;border-color:#f4f4f4 #4a4a4a #4a4a4a #f4f4f4;"></div>
<svg style="left:187px;top:279px" width="7" height="19" viewBox="0 0 7 19" shape-rendering="crispEdges"><path d="M3 2h1v1h1v1h1v2h-5v-2h1v-1h1z" fill="#000"/><path d="M1 12h5v2h-1v1h-1v1h-1v-1h-1v-1h-1z" fill="#000"/></svg>
<div style="left:195px;top:279px;width:49px;height:19px;background:#c0c0c0;border:1px solid;border-color:#dedede #5c5c5c #5c5c5c #dedede;"></div>
<div style="left:197px;top:281px;width:45px;height:15px;border:1px solid;border-color:#666 #e2e2e2 #e2e2e2 #666;"></div>
<div class="t" style="left:197px;top:283px;">5.60</div>
<div class="t" style="left:190px;top:307px;letter-spacing:0.036px;">mean of background noise</div>
<div style="left:187px;top:320px;width:7px;height:9px;background:#c4c4c4;border:1px solid;border-color:#f4f4f4 #4a4a4a #4a4a4a #f4f4f4;"></div>
<div style="left:187px;top:329px;width:7px;height:10px;background:#c4c4c4;border:1px solid;border-color:#f4f4f4 #4a4a4a #4a4a4a #f4f4f4;"></div>
<svg style="left:187px;top:320px" width="7" height="19" viewBox="0 0 7 19" shape-rendering="crispEdges"><path d="M3 2h1v1h1v1h1v2h-5v-2h1v-1h1z" fill="#000"/><path d="M1 12h5v2h-1v1h-1v1h-1v-1h-1v-1h-1z" fill="#000"/></svg>
<div style="left:195px;top:320px;width:49px;height:19px;background:#c0c0c0;border:1px solid;border-color:#dedede #5c5c5c #5c5c5c #dedede;"></div>
<div style="left:197px;top:322px;width:45px;height:15px;border:1px solid;border-color:#666 #e2e2e2 #e2e2e2 #666;"></div>
<div class="t" style="left:197px;top:324px;">30.00</div>
<div class="t" style="left:425px;top:20px;letter-spacing:-0.046px;">Let's Make Some Magic</div>
<svg style="left:423px;top:31px" width="58" height="30" viewBox="-3 -3 58 30"><path d="M4.200000000000003 13C4.200000000000003 7.19 12.16 4.199999999999999 27.6 4.199999999999999C43.04 4.199999999999999 51.0 7.19 51.0 13C51.0 18.81 43.04 21.8 27.6 21.8C12.16 21.8 4.200000000000003 18.81 4.200000000000003 13Z" fill="#3a3e68" opacity=".6" filter="url(#ob)"/><path d="M0.09999999999999787 9.5C0.09999999999999787 3.36 8.19 0.1999999999999993 23.9 0.1999999999999993C39.61 0.1999999999999993 47.7 3.36 47.7 9.5C47.7 15.64 39.61 18.8 23.9 18.8C8.19 18.8 0.09999999999999787 15.64 0.09999999999999787 9.5Z" fill="url(#oo)"/><path d="M1.0 9.2C1.0 3.72 8.79 0.8999999999999986 23.9 0.8999999999999986C39.01 0.8999999999999986 46.8 3.72 46.8 9.2C46.8 14.68 39.01 17.5 23.9 17.5C8.79 17.5 1.0 14.68 1.0 9.2Z" fill="url(#og)"/><path d="M30.2 5.6Q30.2 4.8 31.1 4.8H35.2L42.2 8.7Q43 9.3 42.2 9.9L35.2 13.8H31.1Q30.2 13.8 30.2 13Z" fill="#35681c"/><path d="M31.2 5.8H35L40 8.6" stroke="#47802a" stroke-width=".8" fill="none" opacity=".6"/></svg>
<div class="t" style="left:425px;top:68px;letter-spacing:0.234px;">Test this set up</div>
<svg style="left:423px;top:79px" width="58" height="30" viewBox="-3 -3 58 30"><path d="M4.200000000000003 13C4.200000000000003 7.19 12.16 4.199999999999999 27.6 4.199999999999999C43.04 4.199999999999999 51.0 7.19 51.0 13C51.0 18.81 43.04 21.8 27.6 21.8C12.16 21.8 4.200000000000003 18.81 4.200000000000003 13Z" fill="#3a3e68" opacity=".6" filter="url(#ob)"/><path d="M0.09999999999999787 9.5C0.09999999999999787 3.36 8.19 0.1999999999999993 23.9 0.1999999999999993C39.61 0.1999999999999993 47.7 3.36 47.7 9.5C47.7 15.64 39.61 18.8 23.9 18.8C8.19 18.8 0.09999999999999787 15.64 0.09999999999999787 9.5Z" fill="url(#oo)"/><path d="M1.0 9.2C1.0 3.72 8.79 0.8999999999999986 23.9 0.8999999999999986C39.01 0.8999999999999986 46.8 3.72 46.8 9.2C46.8 14.68 39.01 17.5 23.9 17.5C8.79 17.5 1.0 14.68 1.0 9.2Z" fill="url(#og)"/><path d="M30.2 5.6Q30.2 4.8 31.1 4.8H35.2L42.2 8.7Q43 9.3 42.2 9.9L35.2 13.8H31.1Q30.2 13.8 30.2 13Z" fill="#35681c"/><path d="M31.2 5.8H35L40 8.6" stroke="#47802a" stroke-width=".8" fill="none" opacity=".6"/></svg>
<div class="t" style="left:425px;top:116px;letter-spacing:0.022px;">See this Airy Disk</div>
<svg style="left:423px;top:127px" width="58" height="30" viewBox="-3 -3 58 30"><path d="M4.200000000000003 13C4.200000000000003 7.19 12.16 4.199999999999999 27.6 4.199999999999999C43.04 4.199999999999999 51.0 7.19 51.0 13C51.0 18.81 43.04 21.8 27.6 21.8C12.16 21.8 4.200000000000003 18.81 4.200000000000003 13Z" fill="#3a3e68" opacity=".6" filter="url(#ob)"/><path d="M0.09999999999999787 9.5C0.09999999999999787 3.36 8.19 0.1999999999999993 23.9 0.1999999999999993C39.61 0.1999999999999993 47.7 3.36 47.7 9.5C47.7 15.64 39.61 18.8 23.9 18.8C8.19 18.8 0.09999999999999787 15.64 0.09999999999999787 9.5Z" fill="url(#oo)"/><path d="M1.0 9.2C1.0 3.72 8.79 0.8999999999999986 23.9 0.8999999999999986C39.01 0.8999999999999986 46.8 3.72 46.8 9.2C46.8 14.68 39.01 17.5 23.9 17.5C8.79 17.5 1.0 14.68 1.0 9.2Z" fill="url(#og)"/><path d="M30.2 5.6Q30.2 4.8 31.1 4.8H35.2L42.2 8.7Q43 9.3 42.2 9.9L35.2 13.8H31.1Q30.2 13.8 30.2 13Z" fill="#35681c"/><path d="M31.2 5.8H35L40 8.6" stroke="#47802a" stroke-width=".8" fill="none" opacity=".6"/></svg>
<div class="t" style="left:54px;top:378px;letter-spacing:0.008px;">Dynamic Adjust?</div>
<svg style="left:52px;top:389px" width="58" height="30" viewBox="-3 -3 58 30"><path d="M4.200000000000003 13C4.200000000000003 7.19 12.16 4.199999999999999 27.6 4.199999999999999C43.04 4.199999999999999 51.0 7.19 51.0 13C51.0 18.81 43.04 21.8 27.6 21.8C12.16 21.8 4.200000000000003 18.81 4.200000000000003 13Z" fill="#3a3e68" opacity=".6" filter="url(#ob)"/><path d="M0.09999999999999787 9.5C0.09999999999999787 3.36 8.19 0.1999999999999993 23.9 0.1999999999999993C39.61 0.1999999999999993 47.7 3.36 47.7 9.5C47.7 15.64 39.61 18.8 23.9 18.8C8.19 18.8 0.09999999999999787 15.64 0.09999999999999787 9.5Z" fill="url(#oo)"/><path d="M1.0 9.2C1.0 3.72 8.79 0.8999999999999986 23.9 0.8999999999999986C39.01 0.8999999999999986 46.8 3.72 46.8 9.2C46.8 14.68 39.01 17.5 23.9 17.5C8.79 17.5 1.0 14.68 1.0 9.2Z" fill="url(#og)"/><path d="M30.2 5.6Q30.2 4.8 31.1 4.8H35.2L42.2 8.7Q43 9.3 42.2 9.9L35.2 13.8H31.1Q30.2 13.8 30.2 13Z" fill="#35681c"/><path d="M31.2 5.8H35L40 8.6" stroke="#47802a" stroke-width=".8" fill="none" opacity=".6"/></svg>
<div class="t" style="left:420px;top:164px;letter-spacing:0.365px;">stop</div>
<div style="left:421px;top:177px;width:50px;height:21px;background:#444444;"></div>
<div style="left:422px;top:178px;width:48px;height:19px;background:linear-gradient(to right,#dedede 0,#cfcfcf 3px,#c2c2c2 7px,#c0c0c0 40px,#8c8c8c 44px,#5a5a5a 48px);"></div>
<div style="left:426px;top:178px;width:40px;height:4px;background:linear-gradient(#dcdcdc,#c4c4c4);clip-path:polygon(0 0,100% 0,calc(100% + 0px) 0,100% 100%,0 100%);"></div>
<div style="left:422px;top:178px;width:48px;height:4px;background:linear-gradient(#dedede,rgba(200,200,200,0));clip-path:polygon(0 0,100% 0,calc(100% - 4px) 100%,4px 100%);"></div>
<div style="left:422px;top:193px;width:48px;height:4px;background:linear-gradient(rgba(150,150,150,0),#5e5e5e);clip-path:polygon(4px 0,calc(100% - 4px) 0,100% 100%,0 100%);"></div>
<div class="t" style="left:432px;top:182px;color:#ff0000;letter-spacing:.3px;">STOP</div>
<div class="t" style="left:567px;top:115px;">I0</div>
<div style="left:564px;top:125px;width:54px;height:23px;border:1px solid;border-color:rgba(60,70,150,.16) rgba(255,255,255,.30) rgba(255,255,255,.30) rgba(60,70,150,.16);"></div>
<div style="left:565px;top:126px;width:52px;height:21px;border:1px solid;border-color:rgba(60,70,150,.27) rgba(255,255,255,.36) rgba(255,255,255,.36) rgba(60,70,150,.27);"></div>
<div style="left:566px;top:127px;width:50px;height:19px;border:1px solid;border-color:rgba(60,70,150,.36) rgba(255,255,255,.40) rgba(255,255,255,.40) rgba(60,70,150,.36);"></div>
<div style="left:567px;top:128px;width:48px;height:17px;border:1px solid;border-color:rgba(60,70,150,.44) rgba(255,255,255,.44) rgba(255,255,255,.44) rgba(60,70,150,.44);"></div>
<div style="left:568px;top:129px;width:46px;height:15px;background:#fafafa;"></div>
<div class="t" style="left:569.4px;top:131px;">255</div>
<svg style="left:553.0px;top:124.0px" width="12" height="24" viewBox="0 0 12 24" preserveAspectRatio="none"><ellipse cx="6" cy="12" rx="6" ry="12" fill="url(#sg)"/><ellipse cx="5.5" cy="11.5" rx="5" ry="10.9" fill="#cfcfcf"/><ellipse cx="4.6" cy="8" rx="3" ry="6" fill="#dadada" opacity=".7"/><path d="M.8 11.2h9.6" stroke="#b4b4b4" stroke-width=".7"/><path d="M.8 12h9.8" stroke="#ececec" stroke-width="1"/><path d="M5.9 5L3.7 9.4" stroke="#2c2c2c" stroke-width="1.1" fill="none"/><path d="M6 5.4L8.2 9.7H3.8" stroke="#f0f0f0" stroke-width=".9" fill="none"/><path d="M3.7 14.5H8.3" stroke="#333333" stroke-width="1.1" fill="none"/><path d="M5.7 18.8L4.5 14.8" stroke="#3c3c3c" stroke-width="1.1" fill="none"/><path d="M6.1 18.6L8.2 15" stroke="#f0f0f0" stroke-width=".9" fill="none"/></svg>
<div class="t" style="left:558px;top:147px;letter-spacing:0.088px;">Only works with</div>
<div class="t" style="left:558px;top:160px;letter-spacing:-0.011px;">"See this Airy Disk"</div>
<div class="t" style="left:630px;top:10px;letter-spacing:0.308px;">File Path</div>
<div style="left:631px;top:24px;width:407px;height:52px;background:#c6c6c6;border:1px solid;border-color:#dcdcdc #6a6a6a #6a6a6a #dcdcdc;"></div>
<div style="left:640px;top:26px;width:396px;height:48px;background:#c0c0c0;border:1px solid;border-color:#5e5e5e #dcdcdc #dcdcdc #5e5e5e;"></div>
<svg style="left:632px;top:45px" width="8" height="10" viewBox="0 0 8 10" shape-rendering="crispEdges"><path d="M0 0h4v4h-1v2h-1v-2h-2zM1 1v2h2v-2z" fill="#000" fill-rule="evenodd"/><path d="M2 5h4v5h-4zM3 6v3h2v-3z" fill="#000" fill-rule="evenodd"/></svg>
<div class="t" style="left:641px;top:28px;letter-spacing:.145px;">\\Controller\users\herskowitz.larry\My Documents\Tracking\Creating Images\</div>
<div class="t" style="left:641px;top:41px;">Images 8</div>
<div style="left:1040px;top:24px;width:28px;height:17px;background:#d4d0c8;border:1px solid;border-color:#ffffff #404040 #404040 #ffffff;"></div>
<div style="left:1041px;top:25px;width:26px;height:15px;border:1px solid;border-color:transparent #808080 #808080 transparent;"></div>
<svg style="left:1047px;top:27px" width="15" height="10" viewBox="0 0 15 10" shape-rendering="crispEdges"><rect x="1" y="0" width="3" height="1" fill="#000"/><rect x="0" y="1" width="4" height="1" fill="#000"/><rect x="0" y="2" width="12" height="2" fill="#000"/><rect x="0" y="4" width="15" height="1" fill="#000"/><rect x="0" y="5" width="14" height="1" fill="#000"/><rect x="0" y="6" width="13" height="1" fill="#000"/><rect x="0" y="7" width="12" height="3" fill="#000"/><rect x="1" y="1" width="2" height="2" fill="#ffff00"/><rect x="1" y="3" width="10" height="1" fill="#ffff00"/><rect x="1" y="4" width="2" height="1" fill="#ffff00"/><rect x="1" y="5" width="1" height="2" fill="#ffff00"/><rect x="3" y="5" width="10" height="1" fill="#707070"/><rect x="3" y="6" width="9" height="1" fill="#707070"/><rect x="2" y="7" width="9" height="1" fill="#707070"/><rect x="1" y="8" width="10" height="1" fill="#707070"/></svg>
<div class="t" style="left:630px;top:85px;letter-spacing:0.129px;">Project Configuration File</div>
<div style="left:631px;top:98px;width:407px;height:22px;background:#c6c6c6;border:1px solid;border-color:#dcdcdc #6a6a6a #6a6a6a #dcdcdc;"></div>
<div style="left:640px;top:100px;width:396px;height:18px;background:#b4b4b4;border:1px solid;border-color:#5e5e5e #dcdcdc #dcdcdc #5e5e5e;"></div>
<svg style="left:632px;top:104px" width="8" height="10" viewBox="0 0 8 10" shape-rendering="crispEdges"><path d="M0 0h4v4h-1v2h-1v-2h-2zM1 1v2h2v-2z" fill="#000" fill-rule="evenodd"/><path d="M2 5h4v5h-4zM3 6v3h2v-3z" fill="#000" fill-rule="evenodd"/></svg>
<div class="t" style="left:641px;top:102px;letter-spacing:.145px;">\\Controller\users\herskowitz.larry\My Documents\User Config.ini</div>
<div style="left:1040px;top:98px;width:28px;height:17px;background:#d4d0c8;border:1px solid;border-color:#ffffff #404040 #404040 #ffffff;"></div>
<div style="left:1041px;top:99px;width:26px;height:15px;border:1px solid;border-color:transparent #808080 #808080 transparent;"></div>
<svg style="left:1047px;top:101px" width="15" height="10" viewBox="0 0 15 10" shape-rendering="crispEdges"><rect x="1" y="0" width="3" height="1" fill="#000"/><rect x="0" y="1" width="4" height="1" fill="#000"/><rect x="0" y="2" width="12" height="2" fill="#000"/><rect x="0" y="4" width="15" height="1" fill="#000"/><rect x="0" y="5" width="14" height="1" fill="#000"/><rect x="0" y="6" width="13" height="1" fill="#000"/><rect x="0" y="7" width="12" height="3" fill="#000"/><rect x="1" y="1" width="2" height="2" fill="#ffff00"/><rect x="1" y="3" width="10" height="1" fill="#ffff00"/><rect x="1" y="4" width="2" height="1" fill="#ffff00"/><rect x="1" y="5" width="1" height="2" fill="#ffff00"/><rect x="3" y="5" width="10" height="1" fill="#707070"/><rect x="3" y="6" width="9" height="1" fill="#707070"/><rect x="2" y="7" width="9" height="1" fill="#707070"/><rect x="1" y="8" width="10" height="1" fill="#707070"/></svg>
<div class="t" style="left:436px;top:239px;letter-spacing:-0.205px;">Simulating</div>
<svg style="left:434px;top:252px" width="44" height="44" viewBox="0 0 44 44"><defs><radialGradient id="lg" cx=".33" cy=".28" r=".8"><stop offset="0" stop-color="#f070e0"/><stop offset=".12" stop-color="#d428bc"/><stop offset=".45" stop-color="#b808a0"/><stop offset=".8" stop-color="#a00090"/><stop offset="1" stop-color="#74006a"/></radialGradient><linearGradient id="lr" x1=".15" y1=".15" x2=".85" y2=".85"><stop offset="0" stop-color="#7880c0" stop-opacity=".6"/><stop offset=".45" stop-color="#b0b6e8" stop-opacity=".35"/><stop offset=".7" stop-color="#ffffff" stop-opacity=".7"/><stop offset="1" stop-color="#ffffff" stop-opacity="1"/></linearGradient><filter id="lb" x="-20%" y="-20%" width="140%" height="140%"><feGaussianBlur stdDeviation=".8"/></filter></defs><circle cx="22.2" cy="22" r="19.6" fill="url(#lr)" filter="url(#lb)"/><circle cx="21.9" cy="21.7" r="16.5" fill="url(#lg)"/></svg>
<div class="t" style="left:179px;top:368px;letter-spacing:0.163px;">Front of Microtubule</div>
<div style="left:151px;top:381px;width:28px;height:23px;border:1px solid;border-color:rgba(60,70,150,.16) rgba(255,255,255,.30) rgba(255,255,255,.30) rgba(60,70,150,.16);"></div>
<div style="left:152px;top:382px;width:26px;height:21px;border:1px solid;border-color:rgba(60,70,150,.27) rgba(255,255,255,.36) rgba(255,255,255,.36) rgba(60,70,150,.27);"></div>
<div style="left:153px;top:383px;width:24px;height:19px;border:1px solid;border-color:rgba(60,70,150,.36) rgba(255,255,255,.40) rgba(255,255,255,.40) rgba(60,70,150,.36);"></div>
<div style="left:154px;top:384px;width:22px;height:17px;border:1px solid;border-color:rgba(60,70,150,.44) rgba(255,255,255,.44) rgba(255,255,255,.44) rgba(60,70,150,.44);"></div>
<div style="left:155px;top:385px;width:20px;height:15px;background:#fafafa;"></div>
<div class="t" style="left:156.4px;top:387px;">0</div>
<svg style="left:138.25px;top:379.5px" width="13.5" height="25" viewBox="0 0 12 24" preserveAspectRatio="none"><ellipse cx="6" cy="12" rx="6" ry="12" fill="url(#sg)"/><ellipse cx="5.5" cy="11.5" rx="5" ry="10.9" fill="#cfcfcf"/><ellipse cx="4.6" cy="8" rx="3" ry="6" fill="#dadada" opacity=".7"/><path d="M.8 11.2h9.6" stroke="#b4b4b4" stroke-width=".7"/><path d="M.8 12h9.8" stroke="#ececec" stroke-width="1"/><path d="M5.9 5L3.7 9.4" stroke="#2c2c2c" stroke-width="1.1" fill="none"/><path d="M6 5.4L8.2 9.7H3.8" stroke="#f0f0f0" stroke-width=".9" fill="none"/><path d="M3.7 14.5H8.3" stroke="#333333" stroke-width="1.1" fill="none"/><path d="M5.7 18.8L4.5 14.8" stroke="#3c3c3c" stroke-width="1.1" fill="none"/><path d="M6.1 18.6L8.2 15" stroke="#f0f0f0" stroke-width=".9" fill="none"/></svg>
<div style="left:180px;top:382px;width:60px;height:29px;border:1px solid;border-color:rgba(70,80,155,.16) rgba(255,255,255,.36) rgba(255,255,255,.36) rgba(70,80,155,.16);"></div>
<div style="left:181px;top:383px;width:58px;height:27px;border:1px solid;border-color:rgba(70,80,155,.27) rgba(255,255,255,.40) rgba(255,255,255,.40) rgba(70,80,155,.27);"></div>
<div style="left:182px;top:384px;width:56px;height:25px;border:1px solid;border-color:rgba(70,80,155,.38) rgba(255,255,255,.44) rgba(255,255,255,.44) rgba(70,80,155,.38);"></div>
<div style="left:177px;top:383px;width:3px;height:27px;background:linear-gradient(to right,rgba(80,90,170,.04),rgba(80,90,170,.16));"></div>
<div style="left:183px;top:385px;width:54px;height:23px;border:1px solid;border-color:#8a8a8a #b4b4b4 #b4b4b4 #8a8a8a;"></div>
<div style="left:184px;top:386px;width:52px;height:21px;border:1px solid;border-color:#8c8c8c #b4b4b4 #b4b4b4 #8c8c8c;"></div>
<div style="left:185px;top:387px;width:50px;height:19px;border:1px solid;border-color:#8e8e8e #b2b2b2 #b2b2b2 #8e8e8e;"></div>
<div style="left:186px;top:388px;width:48px;height:17px;border:1px solid;border-color:#909090 #b0b0b0 #b0b0b0 #909090;"></div>
<div style="left:187px;top:389px;width:46px;height:15px;background:#d3d3d3;"></div>
<div class="t" style="left:188px;top:391px;">0.01</div>
<div class="t" style="left:179px;top:416px;letter-spacing:0.003px;">Back of Microtubule</div>
<div style="left:151px;top:429px;width:28px;height:23px;border:1px solid;border-color:rgba(60,70,150,.16) rgba(255,255,255,.30) rgba(255,255,255,.30) rgba(60,70,150,.16);"></div>
<div style="left:152px;top:430px;width:26px;height:21px;border:1px solid;border-color:rgba(60,70,150,.27) rgba(255,255,255,.36) rgba(255,255,255,.36) rgba(60,70,150,.27);"></div>
<div style="left:153px;top:431px;width:24px;height:19px;border:1px solid;border-color:rgba(60,70,150,.36) rgba(255,255,255,.40) rgba(255,255,255,.40) rgba(60,70,150,.36);"></div>
<div style="left:154px;top:432px;width:22px;height:17px;border:1px solid;border-color:rgba(60,70,150,.44) rgba(255,255,255,.44) rgba(255,255,255,.44) rgba(60,70,150,.44);"></div>
<div style="left:155px;top:433px;width:20px;height:15px;background:#fafafa;"></div>
<div class="t" style="left:156.4px;top:435px;">0</div>
<svg style="left:138.25px;top:427.5px" width="13.5" height="25" viewBox="0 0 12 24" preserveAspectRatio="none"><ellipse cx="6" cy="12" rx="6" ry="12" fill="url(#sg)"/><ellipse cx="5.5" cy="11.5" rx="5" ry="10.9" fill="#cfcfcf"/><ellipse cx="4.6" cy="8" rx="3" ry="6" fill="#dadada" opacity=".7"/><path d="M.8 11.2h9.6" stroke="#b4b4b4" stroke-width=".7"/><path d="M.8 12h9.8" stroke="#ececec" stroke-width="1"/><path d="M5.9 5L3.7 9.4" stroke="#2c2c2c" stroke-width="1.1" fill="none"/><path d="M6 5.4L8.2 9.7H3.8" stroke="#f0f0f0" stroke-width=".9" fill="none"/><path d="M3.7 14.5H8.3" stroke="#333333" stroke-width="1.1" fill="none"/><path d="M5.7 18.8L4.5 14.8" stroke="#3c3c3c" stroke-width="1.1" fill="none"/><path d="M6.1 18.6L8.2 15" stroke="#f0f0f0" stroke-width=".9" fill="none"/></svg>
<div style="left:180px;top:430px;width:60px;height:29px;border:1px solid;border-color:rgba(70,80,155,.16) rgba(255,255,255,.36) rgba(255,255,255,.36) rgba(70,80,155,.16);"></div>
<div style="left:181px;top:431px;width:58px;height:27px;border:1px solid;border-color:rgba(70,80,155,.27) rgba(255,255,255,.40) rgba(255,255,255,.40) rgba(70,80,155,.27);"></div>
<div style="left:182px;top:432px;width:56px;height:25px;border:1px solid;border-color:rgba(70,80,155,.38) rgba(255,255,255,.44) rgba(255,255,255,.44) rgba(70,80,155,.38);"></div>
<div style="left:177px;top:431px;width:3px;height:27px;background:linear-gradient(to right,rgba(80,90,170,.04),rgba(80,90,170,.16));"></div>
<div style="left:183px;top:433px;width:54px;height:23px;border:1px solid;border-color:#8a8a8a #b4b4b4 #b4b4b4 #8a8a8a;"></div>
<div style="left:184px;top:434px;width:52px;height:21px;border:1px solid;border-color:#8c8c8c #b4b4b4 #b4b4b4 #8c8c8c;"></div>
<div style="left:185px;top:435px;width:50px;height:19px;border:1px solid;border-color:#8e8e8e #b2b2b2 #b2b2b2 #8e8e8e;"></div>
<div style="left:186px;top:436px;width:48px;height:17px;border:1px solid;border-color:#909090 #b0b0b0 #b0b0b0 #909090;"></div>
<div style="left:187px;top:437px;width:46px;height:15px;background:#d3d3d3;"></div>
<div class="t" style="left:188px;top:439px;">100.01</div>
<div class="t" style="left:138px;top:462px;letter-spacing:0.218px;">Array of Integration Results</div>
<div style="left:152px;top:475px;width:28px;height:23px;border:1px solid;border-color:rgba(60,70,150,.16) rgba(255,255,255,.30) rgba(255,255,255,.30) rgba(60,70,150,.16);"></div>
<div style="left:153px;top:476px;width:26px;height:21px;border:1px solid;border-color:rgba(60,70,150,.27) rgba(255,255,255,.36) rgba(255,255,255,.36) rgba(60,70,150,.27);"></div>
<div style="left:154px;top:477px;width:24px;height:19px;border:1px solid;border-color:rgba(60,70,150,.36) rgba(255,255,255,.40) rgba(255,255,255,.40) rgba(60,70,150,.36);"></div>
<div style="left:155px;top:478px;width:22px;height:17px;border:1px solid;border-color:rgba(60,70,150,.44) rgba(255,255,255,.44) rgba(255,255,255,.44) rgba(60,70,150,.44);"></div>
<div style="left:156px;top:479px;width:20px;height:15px;background:#fafafa;"></div>
<div class="t" style="left:157.4px;top:481px;">0</div>
<svg style="left:139.25px;top:473.5px" width="13.5" height="25" viewBox="0 0 12 24" preserveAspectRatio="none"><ellipse cx="6" cy="12" rx="6" ry="12" fill="url(#sg)"/><ellipse cx="5.5" cy="11.5" rx="5" ry="10.9" fill="#cfcfcf"/><ellipse cx="4.6" cy="8" rx="3" ry="6" fill="#dadada" opacity=".7"/><path d="M.8 11.2h9.6" stroke="#b4b4b4" stroke-width=".7"/><path d="M.8 12h9.8" stroke="#ececec" stroke-width="1"/><path d="M5.9 5L3.7 9.4" stroke="#2c2c2c" stroke-width="1.1" fill="none"/><path d="M6 5.4L8.2 9.7H3.8" stroke="#f0f0f0" stroke-width=".9" fill="none"/><path d="M3.7 14.5H8.3" stroke="#333333" stroke-width="1.1" fill="none"/><path d="M5.7 18.8L4.5 14.8" stroke="#3c3c3c" stroke-width="1.1" fill="none"/><path d="M6.1 18.6L8.2 15" stroke="#f0f0f0" stroke-width=".9" fill="none"/></svg>
<div style="left:181px;top:476px;width:60px;height:29px;border:1px solid;border-color:rgba(70,80,155,.16) rgba(255,255,255,.36) rgba(255,255,255,.36) rgba(70,80,155,.16);"></div>
<div style="left:182px;top:477px;width:58px;height:27px;border:1px solid;border-color:rgba(70,80,155,.27) rgba(255,255,255,.40) rgba(255,255,255,.40) rgba(70,80,155,.27);"></div>
<div style="left:183px;top:478px;width:56px;height:25px;border:1px solid;border-color:rgba(70,80,155,.38) rgba(255,255,255,.44) rgba(255,255,255,.44) rgba(70,80,155,.38);"></div>
<div style="left:178px;top:477px;width:3px;height:27px;background:linear-gradient(to right,rgba(80,90,170,.04),rgba(80,90,170,.16));"></div>
<div style="left:184px;top:479px;width:54px;height:23px;border:1px solid;border-color:#8a8a8a #b4b4b4 #b4b4b4 #8a8a8a;"></div>
<div style="left:185px;top:480px;width:52px;height:21px;border:1px solid;border-color:#8c8c8c #b4b4b4 #b4b4b4 #8c8c8c;"></div>
<div style="left:186px;top:481px;width:50px;height:19px;border:1px solid;border-color:#8e8e8e #b2b2b2 #b2b2b2 #8e8e8e;"></div>
<div style="left:187px;top:482px;width:48px;height:17px;border:1px solid;border-color:#909090 #b0b0b0 #b0b0b0 #909090;"></div>
<div style="left:188px;top:483px;width:46px;height:15px;background:#d3d3d3;"></div>
<div class="t" style="left:189px;top:485px;">13034.7</div>
<div class="t" style="left:139px;top:501px;letter-spacing:0.077px;">I think i only have to run</div>
<div class="t" style="left:139px;top:514px;letter-spacing:0.059px;">the integration once</div>
<div class="t" style="left:330px;top:368px;letter-spacing:0.074px;">Indices of first and last airy disk</div>
<div style="left:302px;top:381px;width:28px;height:23px;border:1px solid;border-color:rgba(60,70,150,.16) rgba(255,255,255,.30) rgba(255,255,255,.30) rgba(60,70,150,.16);"></div>
<div style="left:303px;top:382px;width:26px;height:21px;border:1px solid;border-color:rgba(60,70,150,.27) rgba(255,255,255,.36) rgba(255,255,255,.36) rgba(60,70,150,.27);"></div>
<div style="left:304px;top:383px;width:24px;height:19px;border:1px solid;border-color:rgba(60,70,150,.36) rgba(255,255,255,.40) rgba(255,255,255,.40) rgba(60,70,150,.36);"></div>
<div style="left:305px;top:384px;width:22px;height:17px;border:1px solid;border-color:rgba(60,70,150,.44) rgba(255,255,255,.44) rgba(255,255,255,.44) rgba(60,70,150,.44);"></div>
<div style="left:306px;top:385px;width:20px;height:15px;background:#fafafa;"></div>
<div class="t" style="left:307.4px;top:387px;">0</div>
<svg style="left:289.25px;top:379.5px" width="13.5" height="25" viewBox="0 0 12 24" preserveAspectRatio="none"><ellipse cx="6" cy="12" rx="6" ry="12" fill="url(#sg)"/><ellipse cx="5.5" cy="11.5" rx="5" ry="10.9" fill="#cfcfcf"/><ellipse cx="4.6" cy="8" rx="3" ry="6" fill="#dadada" opacity=".7"/><path d="M.8 11.2h9.6" stroke="#b4b4b4" stroke-width=".7"/><path d="M.8 12h9.8" stroke="#ececec" stroke-width="1"/><path d="M5.9 5L3.7 9.4" stroke="#2c2c2c" stroke-width="1.1" fill="none"/><path d="M6 5.4L8.2 9.7H3.8" stroke="#f0f0f0" stroke-width=".9" fill="none"/><path d="M3.7 14.5H8.3" stroke="#333333" stroke-width="1.1" fill="none"/><path d="M5.7 18.8L4.5 14.8" stroke="#3c3c3c" stroke-width="1.1" fill="none"/><path d="M6.1 18.6L8.2 15" stroke="#f0f0f0" stroke-width=".9" fill="none"/></svg>
<div style="left:330px;top:382px;width:78px;height:126px;border:1px solid;border-color:rgba(70,80,155,.07) rgba(255,255,255,.30) rgba(255,255,255,.30) rgba(70,80,155,.07);"></div>
<div style="left:331px;top:383px;width:76px;height:124px;border:1px solid;border-color:rgba(70,80,155,.16) rgba(255,255,255,.36) rgba(255,255,255,.36) rgba(70,80,155,.16);"></div>
<div style="left:332px;top:384px;width:74px;height:122px;border:1px solid;border-color:rgba(70,80,155,.27) rgba(255,255,255,.40) rgba(255,255,255,.40) rgba(70,80,155,.27);"></div>
<div style="left:333px;top:385px;width:72px;height:120px;border:1px solid;border-color:rgba(70,80,155,.38) rgba(255,255,255,.44) rgba(255,255,255,.44) rgba(70,80,155,.38);"></div>
<div style="left:334px;top:385px;width:70px;height:119px;border:1px solid;border-color:#8a8a8a #b4b4b4 #b4b4b4 #8a8a8a;"></div>
<div style="left:335px;top:386px;width:68px;height:117px;border:1px solid;border-color:#8c8c8c #b4b4b4 #b4b4b4 #8c8c8c;"></div>
<div style="left:336px;top:387px;width:66px;height:115px;border:1px solid;border-color:#8e8e8e #b2b2b2 #b2b2b2 #8e8e8e;"></div>
<div style="left:337px;top:388px;width:64px;height:113px;border:1px solid;border-color:#909090 #b0b0b0 #b0b0b0 #909090;"></div>
<div style="left:338px;top:389px;width:62px;height:111px;background:#a4a4a4;"></div>
<div style="left:338px;top:389px;width:62px;height:55px;border:1px solid;border-color:#949494 #aeaeae #aeaeae #949494;"></div>
<div style="left:339px;top:390px;width:60px;height:53px;border:1px solid;border-color:#969696 #adadad #adadad #969696;"></div>
<div style="left:340px;top:391px;width:58px;height:51px;border:1px solid;border-color:#989898 #acacac #acacac #989898;"></div>
<div style="left:341px;top:392px;width:56px;height:49px;border:1px solid;border-color:#9a9a9a #ababab #ababab #9a9a9a;"></div>
<div style="left:338px;top:444px;width:62px;height:56px;border:1px solid;border-color:#949494 #aeaeae #aeaeae #949494;"></div>
<div style="left:339px;top:445px;width:60px;height:54px;border:1px solid;border-color:#969696 #adadad #adadad #969696;"></div>
<div style="left:340px;top:446px;width:58px;height:52px;border:1px solid;border-color:#989898 #acacac #acacac #989898;"></div>
<div style="left:341px;top:447px;width:56px;height:50px;border:1px solid;border-color:#9a9a9a #ababab #ababab #9a9a9a;"></div>
<div style="left:342px;top:393px;width:54px;height:23px;border:1px solid;border-color:#8a8a8a #b4b4b4 #b4b4b4 #8a8a8a;"></div>
<div style="left:343px;top:394px;width:52px;height:21px;border:1px solid;border-color:#8c8c8c #b4b4b4 #b4b4b4 #8c8c8c;"></div>
<div style="left:344px;top:395px;width:50px;height:19px;border:1px solid;border-color:#8e8e8e #b2b2b2 #b2b2b2 #8e8e8e;"></div>
<div style="left:345px;top:396px;width:48px;height:17px;border:1px solid;border-color:#909090 #b0b0b0 #b0b0b0 #909090;"></div>
<div style="left:346px;top:397px;width:46px;height:15px;background:#d3d3d3;"></div>
<div class="t" style="left:347px;top:399px;">199.11</div>
<div style="left:342px;top:417px;width:54px;height:23px;border:1px solid;border-color:#8a8a8a #b4b4b4 #b4b4b4 #8a8a8a;"></div>
<div style="left:343px;top:418px;width:52px;height:21px;border:1px solid;border-color:#8c8c8c #b4b4b4 #b4b4b4 #8c8c8c;"></div>
<div style="left:344px;top:419px;width:50px;height:19px;border:1px solid;border-color:#8e8e8e #b2b2b2 #b2b2b2 #8e8e8e;"></div>
<div style="left:345px;top:420px;width:48px;height:17px;border:1px solid;border-color:#909090 #b0b0b0 #b0b0b0 #909090;"></div>
<div style="left:346px;top:421px;width:46px;height:15px;background:#d3d3d3;"></div>
<div class="t" style="left:347px;top:423px;">250</div>
<div style="left:342px;top:449px;width:54px;height:23px;border:1px solid;border-color:#8a8a8a #b4b4b4 #b4b4b4 #8a8a8a;"></div>
<div style="left:343px;top:450px;width:52px;height:21px;border:1px solid;border-color:#8c8c8c #b4b4b4 #b4b4b4 #8c8c8c;"></div>
<div style="left:344px;top:451px;width:50px;height:19px;border:1px solid;border-color:#8e8e8e #b2b2b2 #b2b2b2 #8e8e8e;"></div>
<div style="left:345px;top:452px;width:48px;height:17px;border:1px solid;border-color:#909090 #b0b0b0 #b0b0b0 #909090;"></div>
<div style="left:346px;top:453px;width:46px;height:15px;background:#d3d3d3;"></div>
<div class="t" style="left:347px;top:455px;">299.01</div>
<div style="left:342px;top:473px;width:54px;height:23px;border:1px solid;border-color:#8a8a8a #b4b4b4 #b4b4b4 #8a8a8a;"></div>
<div style="left:343px;top:474px;width:52px;height:21px;border:1px solid;border-color:#8c8c8c #b4b4b4 #b4b4b4 #8c8c8c;"></div>
<div style="left:344px;top:475px;width:50px;height:19px;border:1px solid;border-color:#8e8e8e #b2b2b2 #b2b2b2 #8e8e8e;"></div>
<div style="left:345px;top:476px;width:48px;height:17px;border:1px solid;border-color:#909090 #b0b0b0 #b0b0b0 #909090;"></div>
<div style="left:346px;top:477px;width:46px;height:15px;background:#d3d3d3;"></div>
<div class="t" style="left:347px;top:479px;">250</div>
<div class="t" style="left:525px;top:212px;letter-spacing:0.112px;">High Res Image</div>
<div style="left:494px;top:227px;width:29px;height:242px;border:1px solid;border-color:rgba(70,80,155,.07) rgba(255,255,255,.30) rgba(255,255,255,.30) rgba(70,80,155,.07);"></div>
<div style="left:495px;top:228px;width:27px;height:240px;border:1px solid;border-color:rgba(70,80,155,.16) rgba(255,255,255,.36) rgba(255,255,255,.36) rgba(70,80,155,.16);"></div>
<div style="left:496px;top:229px;width:25px;height:238px;border:1px solid;border-color:rgba(70,80,155,.27) rgba(255,255,255,.40) rgba(255,255,255,.40) rgba(70,80,155,.27);"></div>
<div style="left:497px;top:230px;width:23px;height:236px;border:1px solid;border-color:rgba(70,80,155,.38) rgba(255,255,255,.44) rgba(255,255,255,.44) rgba(70,80,155,.38);"></div>
<div style="left:498px;top:231px;width:21px;height:18px;background:#ffffff;"></div>
<svg style="left:498px;top:231px" width="21" height="18" viewBox="0 0 21 18"><circle cx="12.8" cy="7.3" r="5.3" fill="#fff" stroke="#000" stroke-width="1.1"/><path d="M12.6 3.6a3.6 3.6 0 0 1 3.7 2.6" stroke="#00e0e8" stroke-width="1.3" fill="none"/><path d="M9.4 8.6a3.6 3.6 0 0 0 2.2 2.2" stroke="#00e0e8" stroke-width="1.3" fill="none"/><path d="M8.8 11.6L4.3 16.2" stroke="#000" stroke-width="2"/></svg>
<div style="left:498px;top:249px;width:21px;height:18px;background:linear-gradient(#dcdcdc 0,#cacaca 2px,#c0c0c0 13px,#a8a8a8 16px,#848484 18px);border-left:1px solid rgba(255,255,255,.35);border-right:1px solid rgba(0,0,0,.22);"></div>
<svg style="left:498px;top:249px" width="21" height="18" viewBox="0 0 21 18"><path d="M7 2V14.5L9.8 11.8L12 16.3L14.2 15.3L12 10.8H16Z" fill="#000"/></svg>
<div style="left:498px;top:267px;width:21px;height:18px;background:linear-gradient(#dcdcdc 0,#cacaca 2px,#c0c0c0 13px,#a8a8a8 16px,#848484 18px);border-left:1px solid rgba(255,255,255,.35);border-right:1px solid rgba(0,0,0,.22);"></div>
<svg style="left:498px;top:267px" width="21" height="18" viewBox="0 0 21 18"><g transform="translate(-1.7,-1.4) scale(1.2)"><path d="M7.5 9.5V5.2a1 1 0 0 1 2 0V4.3a1 1 0 0 1 2 0V5a1 1 0 0 1 2 0V6a1 1 0 0 1 2 0V11c0 3-2 4.5-4.5 4.5S7 14 5.2 11.2C4.2 9.8 5.6 8.8 7.5 10.8" fill="none" stroke="#000" stroke-width=".9"/><path d="M9.5 5v4M11.5 4.5v4.5M13.5 5v4" stroke="#000" stroke-width=".7"/></g></svg>
<div style="left:498px;top:285px;width:21px;height:18px;background:linear-gradient(#dcdcdc 0,#cacaca 2px,#c0c0c0 13px,#a8a8a8 16px,#848484 18px);border-left:1px solid rgba(255,255,255,.35);border-right:1px solid rgba(0,0,0,.22);"></div>
<svg style="left:498px;top:285px" width="21" height="18" viewBox="0 0 21 18"><path d="M6 9.5h3M12 9.5h3M10.5 5v3M10.5 11v3M10 9.5h1" stroke="#000" stroke-width="1"/></svg>
<div style="left:498px;top:303px;width:21px;height:18px;background:linear-gradient(#dcdcdc 0,#cacaca 2px,#c0c0c0 13px,#a8a8a8 16px,#848484 18px);border-left:1px solid rgba(255,255,255,.35);border-right:1px solid rgba(0,0,0,.22);"></div>
<svg style="left:498px;top:303px" width="21" height="18" viewBox="0 0 21 18"><path d="M6 14L15.5 4.5" stroke="#000" stroke-width="1.1"/></svg>
<div style="left:498px;top:321px;width:21px;height:18px;background:linear-gradient(#dcdcdc 0,#cacaca 2px,#c0c0c0 13px,#a8a8a8 16px,#848484 18px);border-left:1px solid rgba(255,255,255,.35);border-right:1px solid rgba(0,0,0,.22);"></div>
<svg style="left:498px;top:321px" width="21" height="18" viewBox="0 0 21 18"><rect x="5.5" y="4.5" width="11" height="9" fill="none" stroke="#000" stroke-width="1"/></svg>
<div style="left:498px;top:339px;width:21px;height:18px;background:linear-gradient(#dcdcdc 0,#cacaca 2px,#c0c0c0 13px,#a8a8a8 16px,#848484 18px);border-left:1px solid rgba(255,255,255,.35);border-right:1px solid rgba(0,0,0,.22);"></div>
<svg style="left:498px;top:339px" width="21" height="18" viewBox="0 0 21 18"><path d="M10.5 3.5L16.5 9L10.5 14.5L4.5 9Z" fill="none" stroke="#000" stroke-width="1"/></svg>
<div style="left:498px;top:357px;width:21px;height:18px;background:linear-gradient(#dcdcdc 0,#cacaca 2px,#c0c0c0 13px,#a8a8a8 16px,#848484 18px);border-left:1px solid rgba(255,255,255,.35);border-right:1px solid rgba(0,0,0,.22);"></div>
<svg style="left:498px;top:357px" width="21" height="18" viewBox="0 0 21 18"><path d="M6 9L10.5 4.5L16.5 10.5L14.5 13.5H7" fill="none" stroke="#000" stroke-width="1"/></svg>
<div style="left:498px;top:375px;width:21px;height:18px;background:linear-gradient(#dcdcdc 0,#cacaca 2px,#c0c0c0 13px,#a8a8a8 16px,#848484 18px);border-left:1px solid rgba(255,255,255,.35);border-right:1px solid rgba(0,0,0,.22);"></div>
<svg style="left:498px;top:375px" width="21" height="18" viewBox="0 0 21 18"><path d="M5.5 3.5H12.5V7.5H16.5L13.5 13.5H5.5Z" fill="none" stroke="#000" stroke-width="1.1"/></svg>
<div style="left:498px;top:393px;width:21px;height:18px;background:linear-gradient(#dcdcdc 0,#cacaca 2px,#c0c0c0 13px,#a8a8a8 16px,#848484 18px);border-left:1px solid rgba(255,255,255,.35);border-right:1px solid rgba(0,0,0,.22);"></div>
<svg style="left:498px;top:393px" width="21" height="18" viewBox="0 0 21 18"><path d="M7 9.5C5.5 6 10 6.5 12 5.5S16 3.5 15.5 7S13 12 11.5 14" fill="none" stroke="#000" stroke-width="1"/><path d="M7 9.5C9 11 10 10 11 9" fill="none" stroke="#000" stroke-width="1"/></svg>
<div style="left:498px;top:411px;width:21px;height:18px;background:linear-gradient(#dcdcdc 0,#cacaca 2px,#c0c0c0 13px,#a8a8a8 16px,#848484 18px);border-left:1px solid rgba(255,255,255,.35);border-right:1px solid rgba(0,0,0,.22);"></div>
<svg style="left:498px;top:411px" width="21" height="18" viewBox="0 0 21 18"><path d="M8 4.5C10 3 12 3.5 13 5C15.5 5 16.5 7.5 15 9C16.5 11 15 13.5 12.5 13C11 15 8 14.5 7.5 12.5C5 12 4.5 9 6.5 8C5.5 6.5 6.5 4.5 8 4.5Z" fill="none" stroke="#000" stroke-width="1"/></svg>
<div style="left:498px;top:429px;width:21px;height:18px;background:linear-gradient(#dcdcdc 0,#cacaca 2px,#c0c0c0 13px,#a8a8a8 16px,#848484 18px);border-left:1px solid rgba(255,255,255,.35);border-right:1px solid rgba(0,0,0,.22);"></div>
<svg style="left:498px;top:429px" width="21" height="18" viewBox="0 0 21 18"><circle cx="10.5" cy="9" r="5" fill="none" stroke="#000" stroke-width="1"/></svg>
<div style="left:498px;top:447px;width:21px;height:18px;background:linear-gradient(#dcdcdc 0,#cacaca 2px,#c0c0c0 13px,#a8a8a8 16px,#848484 18px);border-left:1px solid rgba(255,255,255,.35);border-right:1px solid rgba(0,0,0,.22);"></div>
<svg style="left:498px;top:447px" width="21" height="18" viewBox="0 0 21 18"><path d="M10 3.5A5.6 5.6 0 1 0 16 10.5L13.2 9.6A2.7 2.7 0 1 1 10.6 6.6Z" fill="none" stroke="#000" stroke-width="1"/></svg>
<div style="left:525px;top:227px;width:345px;height:274px;background:linear-gradient(to right,#c0c0ba 0,#c8c8c8 1px,#c8c8c8 11px,#b4b4b4 14px,#b4b4b4 331px,#a2a2a2 335px,#8e8e8e 339px,#787878 342px,#4e4e4e 345px);"></div>
<div style="left:526px;top:227px;width:341px;height:1px;background:linear-gradient(to right,#cecece 0,#cccccc 330px,rgba(180,180,180,0) 341px);"></div>
<div style="left:526px;top:228px;width:336px;height:1px;background:linear-gradient(to right,#c8c8c8 0,#c2c2c2 12px,#c0c0c0 326px,rgba(180,180,180,0) 336px);"></div>
<div style="left:527px;top:497px;width:343px;height:4px;background:linear-gradient(rgba(150,150,150,0),rgba(120,120,120,.55) 60%,rgba(100,100,100,.95));clip-path:polygon(4px 0,100% 0,100% 100%,0 100%);"></div>
<div style="left:544px;top:236px;width:307px;height:256px;background:#d4d0c8;"></div>
<div style="left:835px;top:476px;width:16px;height:16px;background:#b4b4b4;"></div>
<div style="left:835px;top:236px;width:16px;height:16px;background:#d6d2ca;border:1px solid;border-color:#f3f2ec #6e6a62 #6e6a62 #f3f2ec;"></div>
<svg style="left:835px;top:236px" width="16" height="16" viewBox="0 0 16 16"><path d="M8 4L11.8 10.6H4.2Z" fill="url(#agu)"/></svg>
<div style="left:835px;top:460px;width:16px;height:16px;background:#d6d2ca;border:1px solid;border-color:#f3f2ec #6e6a62 #6e6a62 #f3f2ec;"></div>
<svg style="left:835px;top:460px" width="16" height="16" viewBox="0 0 16 16"><path d="M8 10.8L11.8 4.2H4.2Z" fill="url(#agd)"/></svg>
<div style="left:544px;top:476px;width:16px;height:16px;background:#d6d2ca;border:1px solid;border-color:#f3f2ec #6e6a62 #6e6a62 #f3f2ec;"></div>
<svg style="left:544px;top:476px" width="16" height="16" viewBox="0 0 16 16"><path d="M4.2 8L10.8 4.2V11.8Z" fill="url(#agl)"/></svg>
<div style="left:819px;top:476px;width:16px;height:16px;background:#d6d2ca;border:1px solid;border-color:#f3f2ec #6e6a62 #6e6a62 #f3f2ec;"></div>
<svg style="left:819px;top:476px" width="16" height="16" viewBox="0 0 16 16"><path d="M10.8 8L4.2 4.2V11.8Z" fill="url(#agr)"/></svg>
<div style="left:525px;top:501px;width:350px;height:31px;border:1px solid;border-color:rgba(60,70,150,.16) rgba(255,255,255,.30) rgba(255,255,255,.30) rgba(60,70,150,.16);"></div>
<div style="left:526px;top:502px;width:348px;height:29px;border:1px solid;border-color:rgba(60,70,150,.27) rgba(255,255,255,.36) rgba(255,255,255,.36) rgba(60,70,150,.27);"></div>
<div style="left:527px;top:503px;width:346px;height:27px;border:1px solid;border-color:rgba(60,70,150,.36) rgba(255,255,255,.40) rgba(255,255,255,.40) rgba(60,70,150,.36);"></div>
<div style="left:528px;top:504px;width:344px;height:25px;border:1px solid;border-color:rgba(60,70,150,.44) rgba(255,255,255,.44) rgba(255,255,255,.44) rgba(60,70,150,.44);"></div>
<div style="left:529px;top:505px;width:342px;height:23px;border:1px solid;border-color:#8a8a8a #b4b4b4 #b4b4b4 #8a8a8a;"></div>
<div style="left:530px;top:506px;width:340px;height:21px;border:1px solid;border-color:#8c8c8c #b4b4b4 #b4b4b4 #8c8c8c;"></div>
<div style="left:531px;top:507px;width:338px;height:19px;border:1px solid;border-color:#8e8e8e #b2b2b2 #b2b2b2 #8e8e8e;"></div>
<div style="left:532px;top:508px;width:336px;height:17px;border:1px solid;border-color:#909090 #b0b0b0 #b0b0b0 #909090;"></div>
<div style="left:533px;top:509px;width:334px;height:15px;background:#d3d3d3;"></div>
<div class="t" style="left:906px;top:212px;letter-spacing:0.225px;">Low Res Image</div>
<div style="left:875px;top:227px;width:29px;height:242px;border:1px solid;border-color:rgba(70,80,155,.07) rgba(255,255,255,.30) rgba(255,255,255,.30) rgba(70,80,155,.07);"></div>
<div style="left:876px;top:228px;width:27px;height:240px;border:1px solid;border-color:rgba(70,80,155,.16) rgba(255,255,255,.36) rgba(255,255,255,.36) rgba(70,80,155,.16);"></div>
<div style="left:877px;top:229px;width:25px;height:238px;border:1px solid;border-color:rgba(70,80,155,.27) rgba(255,255,255,.40) rgba(255,255,255,.40) rgba(70,80,155,.27);"></div>
<div style="left:878px;top:230px;width:23px;height:236px;border:1px solid;border-color:rgba(70,80,155,.38) rgba(255,255,255,.44) rgba(255,255,255,.44) rgba(70,80,155,.38);"></div>
<div style="left:879px;top:231px;width:21px;height:18px;background:#ffffff;"></div>
<svg style="left:879px;top:231px" width="21" height="18" viewBox="0 0 21 18"><circle cx="12.8" cy="7.3" r="5.3" fill="#fff" stroke="#000" stroke-width="1.1"/><path d="M12.6 3.6a3.6 3.6 0 0 1 3.7 2.6" stroke="#00e0e8" stroke-width="1.3" fill="none"/><path d="M9.4 8.6a3.6 3.6 0 0 0 2.2 2.2" stroke="#00e0e8" stroke-width="1.3" fill="none"/><path d="M8.8 11.6L4.3 16.2" stroke="#000" stroke-width="2"/></svg>
<div style="left:879px;top:249px;width:21px;height:18px;background:linear-gradient(#dcdcdc 0,#cacaca 2px,#c0c0c0 13px,#a8a8a8 16px,#848484 18px);border-left:1px solid rgba(255,255,255,.35);border-right:1px solid rgba(0,0,0,.22);"></div>
<svg style="left:879px;top:249px" width="21" height="18" viewBox="0 0 21 18"><path d="M7 2V14.5L9.8 11.8L12 16.3L14.2 15.3L12 10.8H16Z" fill="#000"/></svg>
<div style="left:879px;top:267px;width:21px;height:18px;background:linear-gradient(#dcdcdc 0,#cacaca 2px,#c0c0c0 13px,#a8a8a8 16px,#848484 18px);border-left:1px solid rgba(255,255,255,.35);border-right:1px solid rgba(0,0,0,.22);"></div>
<svg style="left:879px;top:267px" width="21" height="18" viewBox="0 0 21 18"><g transform="translate(-1.7,-1.4) scale(1.2)"><path d="M7.5 9.5V5.2a1 1 0 0 1 2 0V4.3a1 1 0 0 1 2 0V5a1 1 0 0 1 2 0V6a1 1 0 0 1 2 0V11c0 3-2 4.5-4.5 4.5S7 14 5.2 11.2C4.2 9.8 5.6 8.8 7.5 10.8" fill="none" stroke="#000" stroke-width=".9"/><path d="M9.5 5v4M11.5 4.5v4.5M13.5 5v4" stroke="#000" stroke-width=".7"/></g></svg>
<div style="left:879px;top:285px;width:21px;height:18px;background:linear-gradient(#dcdcdc 0,#cacaca 2px,#c0c0c0 13px,#a8a8a8 16px,#848484 18px);border-left:1px solid rgba(255,255,255,.35);border-right:1px solid rgba(0,0,0,.22);"></div>
<svg style="left:879px;top:285px" width="21" height="18" viewBox="0 0 21 18"><path d="M6 9.5h3M12 9.5h3M10.5 5v3M10.5 11v3M10 9.5h1" stroke="#000" stroke-width="1"/></svg>
<div style="left:879px;top:303px;width:21px;height:18px;background:linear-gradient(#dcdcdc 0,#cacaca 2px,#c0c0c0 13px,#a8a8a8 16px,#848484 18px);border-left:1px solid rgba(255,255,255,.35);border-right:1px solid rgba(0,0,0,.22);"></div>
<svg style="left:879px;top:303px" width="21" height="18" viewBox="0 0 21 18"><path d="M6 14L15.5 4.5" stroke="#000" stroke-width="1.1"/></svg>
<div style="left:879px;top:321px;width:21px;height:18px;background:linear-gradient(#dcdcdc 0,#cacaca 2px,#c0c0c0 13px,#a8a8a8 16px,#848484 18px);border-left:1px solid rgba(255,255,255,.35);border-right:1px solid rgba(0,0,0,.22);"></div>
<svg style="left:879px;top:321px" width="21" height="18" viewBox="0 0 21 18"><rect x="5.5" y="4.5" width="11" height="9" fill="none" stroke="#000" stroke-width="1"/></svg>
<div style="left:879px;top:339px;width:21px;height:18px;background:linear-gradient(#dcdcdc 0,#cacaca 2px,#c0c0c0 13px,#a8a8a8 16px,#848484 18px);border-left:1px solid rgba(255,255,255,.35);border-right:1px solid rgba(0,0,0,.22);"></div>
<svg style="left:879px;top:339px" width="21" height="18" viewBox="0 0 21 18"><path d="M10.5 3.5L16.5 9L10.5 14.5L4.5 9Z" fill="none" stroke="#000" stroke-width="1"/></svg>
<div style="left:879px;top:357px;width:21px;height:18px;background:linear-gradient(#dcdcdc 0,#cacaca 2px,#c0c0c0 13px,#a8a8a8 16px,#848484 18px);border-left:1px solid rgba(255,255,255,.35);border-right:1px solid rgba(0,0,0,.22);"></div>
<svg style="left:879px;top:357px" width="21" height="18" viewBox="0 0 21 18"><path d="M6 9L10.5 4.5L16.5 10.5L14.5 13.5H7" fill="none" stroke="#000" stroke-width="1"/></svg>
<div style="left:879px;top:375px;width:21px;height:18px;background:linear-gradient(#dcdcdc 0,#cacaca 2px,#c0c0c0 13px,#a8a8a8 16px,#848484 18px);border-left:1px solid rgba(255,255,255,.35);border-right:1px solid rgba(0,0,0,.22);"></div>
<svg style="left:879px;top:375px" width="21" height="18" viewBox="0 0 21 18"><path d="M5.5 3.5H12.5V7.5H16.5L13.5 13.5H5.5Z" fill="none" stroke="#000" stroke-width="1.1"/></svg>
<div style="left:879px;top:393px;width:21px;height:18px;background:linear-gradient(#dcdcdc 0,#cacaca 2px,#c0c0c0 13px,#a8a8a8 16px,#848484 18px);border-left:1px solid rgba(255,255,255,.35);border-right:1px solid rgba(0,0,0,.22);"></div>
<svg style="left:879px;top:393px" width="21" height="18" viewBox="0 0 21 18"><path d="M7 9.5C5.5 6 10 6.5 12 5.5S16 3.5 15.5 7S13 12 11.5 14" fill="none" stroke="#000" stroke-width="1"/><path d="M7 9.5C9 11 10 10 11 9" fill="none" stroke="#000" stroke-width="1"/></svg>
<div style="left:879px;top:411px;width:21px;height:18px;background:linear-gradient(#dcdcdc 0,#cacaca 2px,#c0c0c0 13px,#a8a8a8 16px,#848484 18px);border-left:1px solid rgba(255,255,255,.35);border-right:1px solid rgba(0,0,0,.22);"></div>
<svg style="left:879px;top:411px" width="21" height="18" viewBox="0 0 21 18"><path d="M8 4.5C10 3 12 3.5 13 5C15.5 5 16.5 7.5 15 9C16.5 11 15 13.5 12.5 13C11 15 8 14.5 7.5 12.5C5 12 4.5 9 6.5 8C5.5 6.5 6.5 4.5 8 4.5Z" fill="none" stroke="#000" stroke-width="1"/></svg>
<div style="left:879px;top:429px;width:21px;height:18px;background:linear-gradient(#dcdcdc 0,#cacaca 2px,#c0c0c0 13px,#a8a8a8 16px,#848484 18px);border-left:1px solid rgba(255,255,255,.35);border-right:1px solid rgba(0,0,0,.22);"></div>
<svg style="left:879px;top:429px" width="21" height="18" viewBox="0 0 21 18"><circle cx="10.5" cy="9" r="5" fill="none" stroke="#000" stroke-width="1"/></svg>
<div style="left:879px;top:447px;width:21px;height:18px;background:linear-gradient(#dcdcdc 0,#cacaca 2px,#c0c0c0 13px,#a8a8a8 16px,#848484 18px);border-left:1px solid rgba(255,255,255,.35);border-right:1px solid rgba(0,0,0,.22);"></div>
<svg style="left:879px;top:447px" width="21" height="18" viewBox="0 0 21 18"><path d="M10 3.5A5.6 5.6 0 1 0 16 10.5L13.2 9.6A2.7 2.7 0 1 1 10.6 6.6Z" fill="none" stroke="#000" stroke-width="1"/></svg>
<div style="left:906px;top:227px;width:345px;height:274px;background:linear-gradient(to right,#c0c0ba 0,#c8c8c8 1px,#c8c8c8 11px,#b4b4b4 14px,#b4b4b4 331px,#a2a2a2 335px,#8e8e8e 339px,#787878 342px,#4e4e4e 345px);"></div>
<div style="left:907px;top:227px;width:341px;height:1px;background:linear-gradient(to right,#cecece 0,#cccccc 330px,rgba(180,180,180,0) 341px);"></div>
<div style="left:907px;top:228px;width:336px;height:1px;background:linear-gradient(to right,#c8c8c8 0,#c2c2c2 12px,#c0c0c0 326px,rgba(180,180,180,0) 336px);"></div>
<div style="left:908px;top:497px;width:343px;height:4px;background:linear-gradient(rgba(150,150,150,0),rgba(120,120,120,.55) 60%,rgba(100,100,100,.95));clip-path:polygon(4px 0,100% 0,100% 100%,0 100%);"></div>
<div style="left:925px;top:236px;width:307px;height:256px;background:#d4d0c8;"></div>
<div style="left:1216px;top:476px;width:16px;height:16px;background:#b4b4b4;"></div>
<div style="left:1216px;top:236px;width:16px;height:16px;background:#d6d2ca;border:1px solid;border-color:#f3f2ec #6e6a62 #6e6a62 #f3f2ec;"></div>
<svg style="left:1216px;top:236px" width="16" height="16" viewBox="0 0 16 16"><path d="M8 4L11.8 10.6H4.2Z" fill="url(#agu)"/></svg>
<div style="left:1216px;top:460px;width:16px;height:16px;background:#d6d2ca;border:1px solid;border-color:#f3f2ec #6e6a62 #6e6a62 #f3f2ec;"></div>
<svg style="left:1216px;top:460px" width="16" height="16" viewBox="0 0 16 16"><path d="M8 10.8L11.8 4.2H4.2Z" fill="url(#agd)"/></svg>
<div style="left:925px;top:476px;width:16px;height:16px;background:#d6d2ca;border:1px solid;border-color:#f3f2ec #6e6a62 #6e6a62 #f3f2ec;"></div>
<svg style="left:925px;top:476px" width="16" height="16" viewBox="0 0 16 16"><path d="M4.2 8L10.8 4.2V11.8Z" fill="url(#agl)"/></svg>
<div style="left:1200px;top:476px;width:16px;height:16px;background:#d6d2ca;border:1px solid;border-color:#f3f2ec #6e6a62 #6e6a62 #f3f2ec;"></div>
<svg style="left:1200px;top:476px" width="16" height="16" viewBox="0 0 16 16"><path d="M10.8 8L4.2 4.2V11.8Z" fill="url(#agr)"/></svg>
<div style="left:906px;top:501px;width:353px;height:31px;border:1px solid;border-color:rgba(60,70,150,.16) rgba(255,255,255,.30) rgba(255,255,255,.30) rgba(60,70,150,.16);"></div>
<div style="left:907px;top:502px;width:351px;height:29px;border:1px solid;border-color:rgba(60,70,150,.27) rgba(255,255,255,.36) rgba(255,255,255,.36) rgba(60,70,150,.27);"></div>
<div style="left:908px;top:503px;width:349px;height:27px;border:1px solid;border-color:rgba(60,70,150,.36) rgba(255,255,255,.40) rgba(255,255,255,.40) rgba(60,70,150,.36);"></div>
<div style="left:909px;top:504px;width:347px;height:25px;border:1px solid;border-color:rgba(60,70,150,.44) rgba(255,255,255,.44) rgba(255,255,255,.44) rgba(60,70,150,.44);"></div>
<div style="left:910px;top:505px;width:345px;height:23px;border:1px solid;border-color:#8a8a8a #b4b4b4 #b4b4b4 #8a8a8a;"></div>
<div style="left:911px;top:506px;width:343px;height:21px;border:1px solid;border-color:#8c8c8c #b4b4b4 #b4b4b4 #8c8c8c;"></div>
<div style="left:912px;top:507px;width:341px;height:19px;border:1px solid;border-color:#8e8e8e #b2b2b2 #b2b2b2 #8e8e8e;"></div>
<div style="left:913px;top:508px;width:339px;height:17px;border:1px solid;border-color:#909090 #b0b0b0 #b0b0b0 #909090;"></div>
<div style="left:914px;top:509px;width:337px;height:15px;background:#d3d3d3;"></div>
<div style="left:510px;top:544px;width:248px;height:155px;background:#c0c0c0;border:1px solid;border-color:#e0e0e0 #6a6a6a #6a6a6a #e0e0e0;"></div>
<div style="left:535px;top:555px;width:211px;height:117px;border:1px solid;border-color:#6e6e6e #e4e4e4 #e4e4e4 #6e6e6e;"></div>
<div style="left:536px;top:556px;width:209px;height:115px;background:#000;"></div>
<svg style="left:536px;top:556px" width="209" height="115" viewBox="0 0 209 115" shape-rendering="crispEdges"><rect x="0" y="114" width="209" height="1" fill="#ffff00"/><rect x="0" y="1.2" width="2" height="113.8" fill="#ffff00"/><rect x="2" y="35.0" width="1" height="80.0" fill="#ffff00"/><rect x="3" y="23.8" width="1" height="91.2" fill="#ffff00"/><rect x="4" y="68.9" width="1" height="46.1" fill="#ffff00"/><rect x="6" y="91.4" width="1" height="23.6" fill="#ffff00"/><rect x="7" y="68.9" width="1" height="46.1" fill="#ffff00"/><rect x="10" y="102.7" width="1" height="12.3" fill="#ffff00"/><rect x="11" y="91.4" width="1" height="23.6" fill="#ffff00"/><rect x="15" y="102.7" width="1" height="12.3" fill="#ffff00"/><rect x="16" y="91.4" width="1" height="23.6" fill="#ffff00"/><rect x="17" y="102.7" width="1" height="12.3" fill="#ffff00"/><rect x="50" y="91.4" width="1" height="23.6" fill="#ffff00"/><rect x="51" y="68.9" width="1" height="46.1" fill="#ffff00"/><rect x="69" y="91.4" width="1" height="23.6" fill="#ffff00"/><rect x="70" y="102.7" width="1" height="12.3" fill="#ffff00"/><rect x="122" y="102.7" width="1" height="12.3" fill="#ffff00"/><rect x="123" y="91.4" width="1" height="23.6" fill="#ffff00"/><rect x="124" y="102.7" width="1" height="12.3" fill="#ffff00"/><rect x="161" y="102.7" width="1" height="12.3" fill="#ffff00"/><rect x="162" y="91.4" width="1" height="23.6" fill="#ffff00"/><rect x="207" y="110.6" width="1" height="4.4" fill="#ffff00"/><rect x="208" y="107.2" width="1" height="7.8" fill="#ffff00"/></svg>
<div style="left:529px;top:670px;width:5px;height:1px;background:#000;"></div>
<div class="t" style="left:494.6px;width:32px;text-align:right;top:665px">0</div>
<div style="left:529px;top:642px;width:5px;height:1px;background:#000;"></div>
<div class="t" style="left:494.6px;width:32px;text-align:right;top:637px">5</div>
<div style="left:529px;top:614px;width:5px;height:1px;background:#000;"></div>
<div class="t" style="left:494.6px;width:32px;text-align:right;top:609px">10</div>
<div style="left:529px;top:585px;width:5px;height:1px;background:#000;"></div>
<div class="t" style="left:494.6px;width:32px;text-align:right;top:580px">15</div>
<div style="left:529px;top:557px;width:5px;height:1px;background:#000;"></div>
<div class="t" style="left:494.6px;width:32px;text-align:right;top:552px">20</div>
<div style="left:536px;top:672px;width:1px;height:5px;background:#000;"></div>
<div class="t" style="left:515px;width:41px;text-align:center;top:678px">0</div>
<div style="left:577px;top:672px;width:1px;height:5px;background:#000;"></div>
<div class="t" style="left:556px;width:41px;text-align:center;top:678px">50</div>
<div style="left:618px;top:672px;width:1px;height:5px;background:#000;"></div>
<div class="t" style="left:597px;width:41px;text-align:center;top:678px">100</div>
<div style="left:658px;top:672px;width:1px;height:5px;background:#000;"></div>
<div class="t" style="left:637px;width:41px;text-align:center;top:678px">150</div>
<div style="left:699px;top:672px;width:1px;height:5px;background:#000;"></div>
<div class="t" style="left:678px;width:41px;text-align:center;top:678px">200</div>
<div style="left:740px;top:672px;width:1px;height:5px;background:#000;"></div>
<div style="left:744px;top:672px;width:1px;height:5px;background:#000;"></div>
<div class="t" style="left:723px;width:41px;text-align:center;top:678px">255</div>
<div style="left:891px;top:544px;width:249px;height:155px;background:#c0c0c0;border:1px solid;border-color:#e0e0e0 #6a6a6a #6a6a6a #e0e0e0;"></div>
<div style="left:911px;top:555px;width:217px;height:117px;border:1px solid;border-color:#6e6e6e #e4e4e4 #e4e4e4 #6e6e6e;"></div>
<div style="left:912px;top:556px;width:215px;height:115px;background:#000;"></div>
<svg style="left:912px;top:556px" width="215" height="115" viewBox="0 0 215 115" shape-rendering="crispEdges"><rect x="0" y="114" width="215" height="1" fill="#ffff00"/><rect x="0" y="37.9" width="1" height="77.1" fill="#ffff00"/><rect x="1" y="1.2" width="2" height="113.8" fill="#ffff00"/><rect x="3" y="29.4" width="1" height="85.6" fill="#ffff00"/><rect x="4" y="78.8" width="1" height="36.2" fill="#ffff00"/><rect x="13" y="99.9" width="1" height="15.1" fill="#ffff00"/><rect x="14" y="85.8" width="1" height="29.2" fill="#ffff00"/><rect x="15" y="99.9" width="1" height="15.1" fill="#ffff00"/><rect x="30" y="99.9" width="1" height="15.1" fill="#ffff00"/><rect x="31" y="85.8" width="1" height="29.2" fill="#ffff00"/><rect x="32" y="99.9" width="1" height="15.1" fill="#ffff00"/><rect x="60" y="99.9" width="1" height="15.1" fill="#ffff00"/><rect x="61" y="107.0" width="1" height="8.1" fill="#ffff00"/><rect x="109" y="99.9" width="1" height="15.1" fill="#ffff00"/><rect x="110" y="85.8" width="1" height="29.2" fill="#ffff00"/><rect x="111" y="99.9" width="1" height="15.1" fill="#ffff00"/><rect x="187" y="107.0" width="1" height="8.1" fill="#ffff00"/><rect x="188" y="99.9" width="1" height="15.1" fill="#ffff00"/><rect x="189" y="107.0" width="1" height="8.1" fill="#ffff00"/></svg>
<div style="left:905px;top:670px;width:5px;height:1px;background:#000;"></div>
<div class="t" style="left:870.6px;width:32px;text-align:right;top:665px">0</div>
<div style="left:905px;top:642px;width:5px;height:1px;background:#000;"></div>
<div class="t" style="left:870.6px;width:32px;text-align:right;top:637px">2</div>
<div style="left:905px;top:614px;width:5px;height:1px;background:#000;"></div>
<div class="t" style="left:870.6px;width:32px;text-align:right;top:609px">4</div>
<div style="left:905px;top:585px;width:5px;height:1px;background:#000;"></div>
<div class="t" style="left:870.6px;width:32px;text-align:right;top:580px">6</div>
<div style="left:905px;top:557px;width:5px;height:1px;background:#000;"></div>
<div class="t" style="left:870.6px;width:32px;text-align:right;top:552px">8</div>
<div style="left:912px;top:672px;width:1px;height:5px;background:#000;"></div>
<div class="t" style="left:891px;width:41px;text-align:center;top:678px">0</div>
<div style="left:954px;top:672px;width:1px;height:5px;background:#000;"></div>
<div class="t" style="left:933px;width:41px;text-align:center;top:678px">50</div>
<div style="left:996px;top:672px;width:1px;height:5px;background:#000;"></div>
<div class="t" style="left:975px;width:41px;text-align:center;top:678px">100</div>
<div style="left:1038px;top:672px;width:1px;height:5px;background:#000;"></div>
<div class="t" style="left:1017px;width:41px;text-align:center;top:678px">150</div>
<div style="left:1080px;top:672px;width:1px;height:5px;background:#000;"></div>
<div class="t" style="left:1059px;width:41px;text-align:center;top:678px">200</div>
<div style="left:1122px;top:672px;width:1px;height:5px;background:#000;"></div>
<div style="left:1126px;top:672px;width:1px;height:5px;background:#000;"></div>
<div class="t" style="left:1105px;width:41px;text-align:center;top:678px">255</div>
<div class="t" style="left:757px;top:542px;letter-spacing:0.091px;">Mean Value High Res</div>
<div style="left:758px;top:556px;width:60px;height:19px;background:#c0c0c0;border:1px solid;border-color:#dedede #5c5c5c #5c5c5c #dedede;"></div>
<div style="left:760px;top:558px;width:56px;height:15px;border:1px solid;border-color:#666 #e2e2e2 #e2e2e2 #666;"></div>
<div class="t" style="left:760px;top:560px;">26.95</div>
<div class="t" style="left:757px;top:577px;letter-spacing:0.091px;">Standard  Deviation</div>
<div class="t" style="left:757px;top:590px;letter-spacing:0.165px;">High Res</div>
<div style="left:758px;top:604px;width:60px;height:19px;background:#c0c0c0;border:1px solid;border-color:#dedede #5c5c5c #5c5c5c #dedede;"></div>
<div style="left:760px;top:606px;width:56px;height:15px;border:1px solid;border-color:#666 #e2e2e2 #e2e2e2 #666;"></div>
<div class="t" style="left:760px;top:608px;">53.74</div>
<div class="t" style="left:1142px;top:541px;letter-spacing:0.128px;">Mean Value Low Res</div>
<div style="left:1143px;top:555px;width:60px;height:19px;background:#c0c0c0;border:1px solid;border-color:#dedede #5c5c5c #5c5c5c #dedede;"></div>
<div style="left:1145px;top:557px;width:56px;height:15px;border:1px solid;border-color:#666 #e2e2e2 #e2e2e2 #666;"></div>
<div class="t" style="left:1145px;top:559px;">20.06</div>
<div class="t" style="left:1142px;top:576px;letter-spacing:0.058px;">Standard  Deviation</div>
<div class="t" style="left:1142px;top:589px;letter-spacing:0.366px;">Low Res</div>
<div style="left:1143px;top:603px;width:60px;height:19px;background:#c0c0c0;border:1px solid;border-color:#dedede #5c5c5c #5c5c5c #dedede;"></div>
<div style="left:1145px;top:605px;width:56px;height:15px;border:1px solid;border-color:#666 #e2e2e2 #e2e2e2 #666;"></div>
<div class="t" style="left:1145px;top:607px;">46.75</div>
</body></html>
